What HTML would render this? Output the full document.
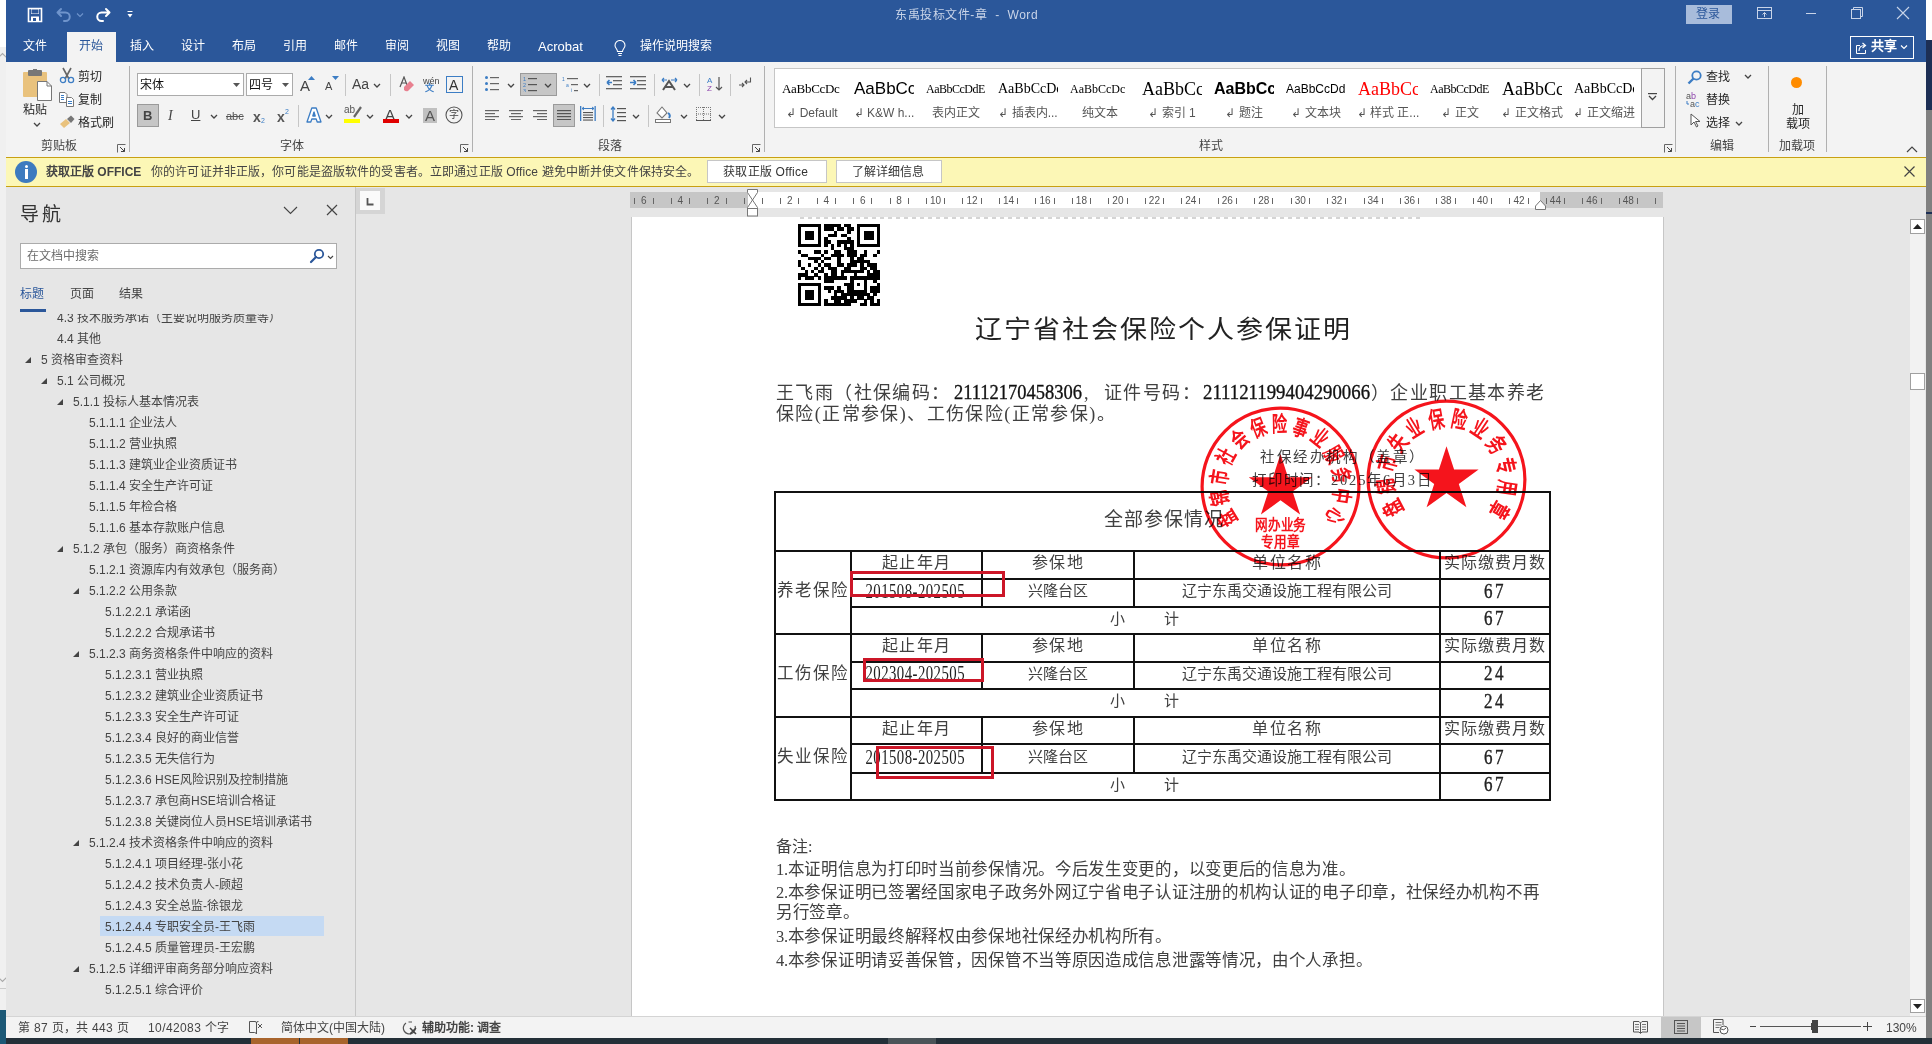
<!DOCTYPE html>
<html lang="zh-CN"><head><meta charset="utf-8">
<style>
*{margin:0;padding:0;box-sizing:border-box}
html,body{width:1932px;height:1044px;overflow:hidden;background:#e6e6e6;font-family:"Liberation Sans",sans-serif;}
.a{position:absolute}
.t{position:absolute;white-space:nowrap;line-height:1;font-size:12px}
.w{color:#fff}
.sep{position:absolute;width:1px;background:#c6c6c6}
.doc{font-family:"Liberation Serif",serif;color:#333}
</style></head><body>
<!-- desktop strips -->
<div class="a" style="left:0;top:0;width:6px;height:47px;background:#fff"></div>
<div class="a" style="left:0;top:47px;width:6px;height:963px;background:#f0f0f0"></div>
<div class="a" style="left:0;top:1010px;width:6px;height:34px;background:#1b5876"></div>
<svg class="a" style="left:0;top:52px" width="6" height="8" viewBox="0 0 6 8"><path d="M-2 6 L2.5 1.5 L7 6" fill="none" stroke="#aaa" stroke-width="1.2"/></svg>
<svg class="a" style="left:0;top:976px" width="6" height="7" viewBox="0 0 6 7"><path d="M-2 1 L2.5 5.5 L7 1" fill="none" stroke="#aaa" stroke-width="1.2"/></svg>
<div class="a" style="left:0;top:988px;width:6px;height:1px;background:#ccc"></div>
<div class="a" style="left:1929px;top:4px;width:3px;height:4px;background:#f08a24"></div>
<div class="a" style="left:1929px;top:9px;width:3px;height:6px;background:#2a9a3a"></div>
<div class="a" style="left:1926px;top:0;width:6px;height:40px;background:#fff"></div>
<div class="a" style="left:1926px;top:40px;width:6px;height:70px;background:#1d2f55"></div>
<div class="a" style="left:1926px;top:110px;width:6px;height:934px;background:#808080"></div>
<div class="a" style="left:1926px;top:212px;width:6px;height:2px;background:#1d2f55"></div>
<!-- title bar -->
<div id="title" class="a" style="left:6px;top:0;width:1920px;height:62px;background:#2b579a"></div>
<!-- title content -->
<svg class="a" style="left:27px;top:7px" width="16" height="16" viewBox="0 0 16 16"><path d="M1.5 1.5h13v13h-13z" fill="none" stroke="#fff" stroke-width="1.6"/><rect x="4" y="2" width="8" height="5" fill="#fff"/><rect x="4.5" y="2.5" width="7" height="4" fill="#2b579a"/><rect x="4" y="9.5" width="8" height="5" fill="#fff"/><rect x="6" y="11" width="3" height="3" fill="#2b579a"/></svg>
<svg class="a" style="left:56px;top:7px" width="16" height="16" viewBox="0 0 16 16"><path d="M5 2 L1.5 5.5 L5 9 M1.5 5.5 H9.5 A4.2 4.2 0 0 1 9.5 14 H8" fill="none" stroke="#6f94cc" stroke-width="2" stroke-linecap="round" stroke-linejoin="round"/></svg>
<svg class="a" style="left:76px;top:12px" width="8" height="6" viewBox="0 0 8 6"><path d="M1 1.5 L4 4.5 L7 1.5" fill="none" stroke="#6f94cc" stroke-width="1.1"/></svg>
<svg class="a" style="left:95px;top:7px" width="16" height="16" viewBox="0 0 16 16"><path d="M11 2 L14.5 5.5 L11 9 M14.5 5.5 H6.5 A4.2 4.2 0 0 0 6.5 14 H8" fill="none" stroke="#fff" stroke-width="2" stroke-linecap="round" stroke-linejoin="round"/></svg>
<svg class="a" style="left:127px;top:11px" width="7" height="8" viewBox="0 0 7 8"><rect x="0.5" y="0" width="5" height="1" fill="#fff"/><path d="M0.5 3 H5.5 L3 6.5 Z" fill="#fff"/></svg>
<div class="t" style="left:895px;top:9px;color:#c9d4e8;font-size:12px;letter-spacing:0.55px">东禹投标文件-章&nbsp;&nbsp;-&nbsp;&nbsp;Word</div>
<div class="a" style="left:1686px;top:5px;width:46px;height:19px;background:#a8bcdb"></div>
<div class="t" style="left:1696px;top:8px;color:#2b579a;font-size:12px">登录</div>
<svg class="a" style="left:1757px;top:7px" width="15" height="12" viewBox="0 0 15 12"><rect x="0.5" y="0.5" width="14" height="11" fill="none" stroke="#c9d4e8"/><path d="M0.5 3.5 H14.5" stroke="#c9d4e8"/><path d="M7.5 10 V5.5 M5.5 7.5 L7.5 5.5 L9.5 7.5" fill="none" stroke="#c9d4e8"/></svg>
<div class="a" style="left:1806px;top:13px;width:10px;height:1px;background:#c9d4e8"></div>
<svg class="a" style="left:1851px;top:7px" width="12" height="12" viewBox="0 0 12 12"><rect x="0.5" y="2.5" width="9" height="9" fill="none" stroke="#c9d4e8"/><path d="M2.5 2.5 V0.5 H11.5 V9.5 H9.5" fill="none" stroke="#c9d4e8"/></svg>
<svg class="a" style="left:1896px;top:6px" width="14" height="14" viewBox="0 0 14 14"><path d="M1 1 L13 13 M13 1 L1 13" stroke="#c9d4e8" stroke-width="1.1"/></svg>
<!-- tabs -->
<div class="a" style="left:67px;top:32px;width:49px;height:30px;background:#f3f3f3"></div>
<div class="t w" style="left:23px;top:40px">文件</div>
<div class="t" style="left:79px;top:40px;color:#2b579a">开始</div>
<div class="t w" style="left:130px;top:40px">插入</div>
<div class="t w" style="left:181px;top:40px">设计</div>
<div class="t w" style="left:232px;top:40px">布局</div>
<div class="t w" style="left:283px;top:40px">引用</div>
<div class="t w" style="left:334px;top:40px">邮件</div>
<div class="t w" style="left:385px;top:40px">审阅</div>
<div class="t w" style="left:436px;top:40px">视图</div>
<div class="t w" style="left:487px;top:40px">帮助</div>
<div class="t w" style="left:538px;top:40px;font-size:13px">Acrobat</div>
<svg class="a" style="left:613px;top:40px" width="14" height="17" viewBox="0 0 14 17"><path d="M4.5 11.5 C4.5 9 2 8 2 5.5 A5 5 0 0 1 12 5.5 C12 8 9.5 9 9.5 11.5 Z" fill="none" stroke="#fff" stroke-width="1.1"/><path d="M5 13.5 H9 M5.5 15.5 H8.5" stroke="#fff" stroke-width="1.1"/></svg>
<div class="t w" style="left:640px;top:40px">操作说明搜索</div>
<div class="a" style="left:1850px;top:36px;width:64px;height:23px;border:1px solid #fff"></div>
<svg class="a" style="left:1855px;top:41px" width="13" height="14" viewBox="0 0 13 14"><path d="M5 4.5 H1.5 V12.5 H10.5 V9" fill="none" stroke="#fff" stroke-width="1"/><path d="M4 10 C4 6 6.5 4.5 9.5 4.5 M7.5 2 L10.5 4.5 L7.5 7" fill="none" stroke="#fff" stroke-width="1.2"/></svg>
<div class="t w" style="left:1871px;top:39px;font-weight:bold;font-size:13px">共享</div>
<svg class="a" style="left:1900px;top:44px" width="8" height="6" viewBox="0 0 8 6"><path d="M1 1.5 L4 4.5 L7 1.5" fill="none" stroke="#fff" stroke-width="1.2"/></svg>
<!-- ribbon -->
<div id="ribbon" class="a" style="left:6px;top:62px;width:1920px;height:95px;background:#f3f3f3"></div>
<svg class="a" style="left:22px;top:69px" width="30" height="32" viewBox="0 0 30 32"><rect x="1" y="3" width="24" height="25" rx="1" fill="#e9c27d"/><rect x="6" y="1" width="14" height="6" rx="1" fill="#777"/><rect x="11" y="0" width="4" height="3" fill="#777"/><path d="M15.5 12.5 H25 L29.5 17 V31.5 H15.5 Z" fill="#fff" stroke="#777" stroke-width="1"/><path d="M25 12.5 V17 H29.5" fill="none" stroke="#777"/></svg>
<div class="t" style="left:23px;top:104px;color:#262626">粘贴</div>
<svg class="a" style="left:33px;top:122px" width="8" height="5" viewBox="0 0 8 5"><path d="M1 1 L4 4 L7 1" fill="none" stroke="#444" stroke-width="1.3"/></svg>
<svg class="a" style="left:59px;top:67px" width="16" height="17" viewBox="0 0 16 17"><path d="M4 1 L10 12 M12 1 L6 12" stroke="#666" stroke-width="1.6"/><circle cx="4" cy="13" r="2.6" fill="none" stroke="#3c7dc4" stroke-width="1.3"/><circle cx="12" cy="13" r="2.6" fill="none" stroke="#3c7dc4" stroke-width="1.3"/></svg>
<div class="t" style="left:78px;top:71px;color:#262626">剪切</div>
<svg class="a" style="left:59px;top:92px" width="16" height="15" viewBox="0 0 16 15"><path d="M0.5 0.5 H6 L8 2.5 V10.5 H0.5 Z" fill="#fff" stroke="#777"/><path d="M2 3.5h3M2 5.5h3M2 7.5h3" stroke="#3c7dc4"/><path d="M7.5 5.5 H12.5 L14.5 7.5 V14.5 H7.5 Z" fill="#fff" stroke="#777"/><path d="M9 9.5h4M9 11.5h4" stroke="#3c7dc4"/></svg>
<div class="t" style="left:78px;top:94px;color:#262626">复制</div>
<svg class="a" style="left:59px;top:114px" width="17" height="15" viewBox="0 0 17 15"><path d="M1 10 L7 5 L11 9 L5 14 Z" fill="#e9c27d"/><path d="M8 5 L12 1.5 L15.5 5 L12 9 Z" fill="#777"/></svg>
<div class="t" style="left:78px;top:117px;color:#262626">格式刷</div>
<div class="t" style="left:41px;top:140px;color:#444">剪贴板</div>
<svg class="a" style="left:117px;top:144px" width="9" height="9" viewBox="0 0 9 9"><path d="M0.5 8.5 V0.5 H8.5" fill="none" stroke="#666" stroke-width="1"/><path d="M3 3 L7.5 7.5 M4 7.5 H7.5 V4" fill="none" stroke="#444" stroke-width="1"/></svg>
<div class="a" style="left:129px;top:66px;width:1px;height:86px;background:#b0b0b0"></div>
<div class="a" style="left:137px;top:73px;width:107px;height:23px;background:#fff;border:1px solid #ababab"></div>
<div class="t" style="left:140px;top:79px;color:#111">宋体</div>
<svg class="a" style="left:233px;top:83px" width="7" height="4" viewBox="0 0 7 4"><path d="M0 0 H7 L3.5 4 Z" fill="#555"/></svg>
<div class="a" style="left:246px;top:73px;width:47px;height:23px;background:#fff;border:1px solid #ababab"></div>
<div class="t" style="left:249px;top:79px;color:#111">四号</div>
<svg class="a" style="left:282px;top:83px" width="7" height="4" viewBox="0 0 7 4"><path d="M0 0 H7 L3.5 4 Z" fill="#555"/></svg>
<div class="t" style="left:300px;top:78px;font-size:15px;color:#444">A</div>
<svg class="a" style="left:308px;top:76px" width="7" height="4" viewBox="0 0 7 4"><path d="M0 4 H7 L3.5 0 Z" fill="#3c7dc4"/></svg>
<div class="t" style="left:325px;top:81px;font-size:11px;color:#444">A</div>
<svg class="a" style="left:332px;top:76px" width="7" height="4" viewBox="0 0 7 4"><path d="M0 0 H7 L3.5 4 Z" fill="#3c7dc4"/></svg>
<div class="a" style="left:345px;top:74px;width:1px;height:22px;background:#c6c6c6"></div>
<div class="t" style="left:352px;top:77px;font-size:14px;color:#444">Aa</div>
<svg class="a" style="left:373px;top:83px" width="8" height="5" viewBox="0 0 8 5"><path d="M1 1 L4 4 L7 1" fill="none" stroke="#444" stroke-width="1.3"/></svg>
<div class="a" style="left:390px;top:74px;width:1px;height:22px;background:#c6c6c6"></div>
<svg class="a" style="left:399px;top:76px" width="17" height="17" viewBox="0 0 17 17"><path d="M1 11 L5 1 L8 9" fill="none" stroke="#555" stroke-width="1.2"/><path d="M2.5 7 H7" stroke="#555"/><path d="M5 11 L11 5 L15 9 L9 15 Q7 16 5 14 Z" fill="#e8808f"/></svg>
<div class="t" style="left:423px;top:77px;font-size:9px;color:#444">wén</div>
<div class="t" style="left:425px;top:84px;font-size:9px;color:#3c7dc4;font-weight:bold">文</div>
<div class="a" style="left:446px;top:76px;width:17px;height:17px;border:1px solid #3c7dc4"></div>
<div class="t" style="left:449px;top:78px;font-size:14px;color:#333">A</div>
<div class="a" style="left:137px;top:104px;width:22px;height:23px;background:#c6c6c6;border:1px solid #9a9a9a"></div>
<div class="t" style="left:143px;top:109px;font-size:13px;font-weight:bold;color:#444">B</div>
<div class="t" style="left:168px;top:109px;font-size:14px;font-style:italic;font-family:Liberation Serif,serif;color:#444">I</div>
<div class="t" style="left:191px;top:108px;font-size:13px;color:#444;text-decoration:underline">U</div>
<svg class="a" style="left:210px;top:114px" width="8" height="5" viewBox="0 0 8 5"><path d="M1 1 L4 4 L7 1" fill="none" stroke="#444" stroke-width="1.3"/></svg>
<div class="t" style="left:226px;top:111px;font-size:11px;color:#555;text-decoration:line-through">abc</div>
<div class="t" style="left:253px;top:110px;font-size:14px;font-weight:bold;color:#555">x</div>
<div class="t" style="left:261px;top:117px;font-size:7px;color:#3c7dc4">2</div>
<div class="t" style="left:277px;top:110px;font-size:14px;font-weight:bold;color:#555">x</div>
<div class="t" style="left:285px;top:108px;font-size:7px;color:#3c7dc4">2</div>
<div class="a" style="left:298px;top:105px;width:1px;height:22px;background:#c6c6c6"></div>
<svg class="a" style="left:306px;top:107px" width="16" height="16" viewBox="0 0 16 16"><path d="M5.8 1 H10.2 L15 15 H11.2 L10.2 12 H5.8 L4.8 15 H1 Z M6.8 9 H9.2 L8 5 Z" fill="#fff" stroke="#3c7dc4" stroke-width="1.3" stroke-linejoin="round"/><path d="M6.8 9 H9.2 L8 5 Z" fill="#3c7dc4"/></svg>
<svg class="a" style="left:325px;top:114px" width="8" height="5" viewBox="0 0 8 5"><path d="M1 1 L4 4 L7 1" fill="none" stroke="#444" stroke-width="1.3"/></svg>
<div class="t" style="left:344px;top:105px;font-size:10px;color:#555">ab</div>
<svg class="a" style="left:352px;top:106px" width="10" height="14" viewBox="0 0 10 14"><path d="M9 1 L2 11" stroke="#666" stroke-width="2.2"/></svg>
<div class="a" style="left:344px;top:119px;width:16px;height:4px;background:#ffff00"></div>
<svg class="a" style="left:366px;top:114px" width="8" height="5" viewBox="0 0 8 5"><path d="M1 1 L4 4 L7 1" fill="none" stroke="#444" stroke-width="1.3"/></svg>
<div class="t" style="left:385px;top:107px;font-size:15px;color:#444">A</div>
<div class="a" style="left:383px;top:119px;width:16px;height:4px;background:#e00000"></div>
<svg class="a" style="left:405px;top:114px" width="8" height="5" viewBox="0 0 8 5"><path d="M1 1 L4 4 L7 1" fill="none" stroke="#444" stroke-width="1.3"/></svg>
<div class="a" style="left:423px;top:108px;width:14px;height:15px;background:#c0c0c0"></div>
<div class="t" style="left:425px;top:108px;font-size:15px;color:#555">A</div>
<svg class="a" style="left:445px;top:106px" width="18" height="18" viewBox="0 0 18 18"><circle cx="9" cy="9" r="8" fill="none" stroke="#555" stroke-width="1.1"/></svg>
<div class="t" style="left:449px;top:110px;font-size:10px;color:#444">字</div>
<div class="t" style="left:280px;top:140px;color:#444">字体</div>
<svg class="a" style="left:460px;top:144px" width="9" height="9" viewBox="0 0 9 9"><path d="M0.5 8.5 V0.5 H8.5" fill="none" stroke="#666" stroke-width="1"/><path d="M3 3 L7.5 7.5 M4 7.5 H7.5 V4" fill="none" stroke="#444" stroke-width="1"/></svg>
<div class="a" style="left:472px;top:66px;width:1px;height:86px;background:#b0b0b0"></div>
<svg class="a" style="left:485px;top:76px" width="14" height="16" viewBox="0 0 14 16"><circle cx="1.5" cy="1.5" r="1.5" fill="#3c7dc4"/><rect x="5" y="1" width="9" height="1.2" fill="#666"/><circle cx="1.5" cy="7.5" r="1.5" fill="#3c7dc4"/><rect x="5" y="7" width="9" height="1.2" fill="#666"/><circle cx="1.5" cy="13.5" r="1.5" fill="#3c7dc4"/><rect x="5" y="13" width="9" height="1.2" fill="#666"/></svg>
<svg class="a" style="left:507px;top:83px" width="8" height="5" viewBox="0 0 8 5"><path d="M1 1 L4 4 L7 1" fill="none" stroke="#444" stroke-width="1.3"/></svg>
<div class="a" style="left:520px;top:73px;width:37px;height:23px;background:#c6c6c6;border:1px solid #9a9a9a"></div>
<svg class="a" style="left:523px;top:76px" width="16" height="16" viewBox="0 0 16 16"><text x="0" y="5" font-size="5.5" fill="#3c7dc4" font-family="Liberation Sans">1</text><rect x="5" y="2" width="9" height="1.2" fill="#555"/><text x="0" y="11" font-size="5.5" fill="#3c7dc4" font-family="Liberation Sans">2</text><rect x="5" y="8" width="9" height="1.2" fill="#555"/><text x="0" y="17" font-size="5.5" fill="#3c7dc4" font-family="Liberation Sans">3</text><rect x="5" y="14" width="9" height="1.2" fill="#555"/></svg>
<svg class="a" style="left:544px;top:83px" width="8" height="5" viewBox="0 0 8 5"><path d="M1 1 L4 4 L7 1" fill="none" stroke="#444" stroke-width="1.3"/></svg>
<svg class="a" style="left:562px;top:76px" width="20" height="16" viewBox="0 0 20 16"><text x="0" y="5" font-size="5" fill="#3c7dc4" font-family="Liberation Sans">1</text><rect x="5" y="2" width="11" height="1.2" fill="#666"/><text x="4" y="11" font-size="5" fill="#3c7dc4" font-family="Liberation Sans">a</text><rect x="9" y="8" width="7" height="1.2" fill="#666"/><text x="9" y="16" font-size="5" fill="#3c7dc4" font-family="Liberation Sans">i</text><rect x="12" y="14" width="4" height="1.2" fill="#666"/></svg>
<svg class="a" style="left:583px;top:83px" width="8" height="5" viewBox="0 0 8 5"><path d="M1 1 L4 4 L7 1" fill="none" stroke="#444" stroke-width="1.3"/></svg>
<div class="a" style="left:599px;top:74px;width:1px;height:22px;background:#c6c6c6"></div>
<svg class="a" style="left:606px;top:76px" width="18" height="15" viewBox="0 0 18 15"><rect x="0" y="0" width="16" height="1.3" fill="#666"/><rect x="7" y="4" width="9" height="1.3" fill="#666"/><rect x="7" y="8" width="9" height="1.3" fill="#666"/><rect x="0" y="12" width="16" height="1.3" fill="#666"/><path d="M1 6.5 H6 M1 6.5 L3.5 4 M1 6.5 L3.5 9" stroke="#3c7dc4" stroke-width="1.6" fill="none"/></svg>
<svg class="a" style="left:630px;top:76px" width="18" height="15" viewBox="0 0 18 15"><rect x="0" y="0" width="16" height="1.3" fill="#666"/><rect x="7" y="4" width="9" height="1.3" fill="#666"/><rect x="7" y="8" width="9" height="1.3" fill="#666"/><rect x="0" y="12" width="16" height="1.3" fill="#666"/><path d="M0 6.5 H6 M6 6.5 L3.5 4 M6 6.5 L3.5 9" stroke="#3c7dc4" stroke-width="1.6" fill="none"/></svg>
<div class="a" style="left:654px;top:74px;width:1px;height:22px;background:#c6c6c6"></div>
<svg class="a" style="left:661px;top:77px" width="18" height="14" viewBox="0 0 18 14"><path d="M2 13 L8 4 L14 13 M4.5 10 H11.5" fill="none" stroke="#555" stroke-width="2"/><path d="M1 3 H6 M1 3 L3 1 M1 3 L3 5 M10 3 H16 M16 3 L14 1 M16 3 L14 5" stroke="#3c7dc4" stroke-width="1.2" fill="none"/></svg>
<svg class="a" style="left:683px;top:83px" width="8" height="5" viewBox="0 0 8 5"><path d="M1 1 L4 4 L7 1" fill="none" stroke="#444" stroke-width="1.3"/></svg>
<div class="a" style="left:699px;top:74px;width:1px;height:22px;background:#c6c6c6"></div>
<svg class="a" style="left:707px;top:76px" width="16" height="16" viewBox="0 0 16 16"><text x="0" y="7" font-size="8" fill="#3c7dc4" font-family="Liberation Sans">A</text><text x="0" y="15" font-size="8" fill="#8e44ad" font-family="Liberation Sans">Z</text><path d="M12 1 V14 M9 11 L12 14 L15 11" stroke="#555" stroke-width="1.2" fill="none"/></svg>
<div class="a" style="left:730px;top:74px;width:1px;height:22px;background:#c6c6c6"></div>
<svg class="a" style="left:739px;top:77px" width="13" height="12" viewBox="0 0 13 12"><path d="M11.5 0.5 V5 H6 M8 3 L6 5 L8 7" fill="none" stroke="#555" stroke-width="1.1"/><path d="M0 8 H5 M3 6 L5 8 L3 10" fill="none" stroke="#555" stroke-width="1.1"/></svg>
<svg class="a" style="left:485px;top:110px" width="14" height="10" viewBox="0 0 14 10"><rect x="0" y="0" width="14" height="1.2" fill="#666"/><rect x="0" y="3" width="10" height="1.2" fill="#666"/><rect x="0" y="6" width="14" height="1.2" fill="#666"/><rect x="0" y="9" width="10" height="1.2" fill="#666"/></svg>
<svg class="a" style="left:509px;top:110px" width="14" height="10" viewBox="0 0 14 10"><rect x="0" y="0" width="14" height="1.2" fill="#666"/><rect x="2" y="3" width="10" height="1.2" fill="#666"/><rect x="0" y="6" width="14" height="1.2" fill="#666"/><rect x="2" y="9" width="10" height="1.2" fill="#666"/></svg>
<svg class="a" style="left:533px;top:110px" width="14" height="10" viewBox="0 0 14 10"><rect x="0" y="0" width="14" height="1.2" fill="#666"/><rect x="4" y="3" width="10" height="1.2" fill="#666"/><rect x="0" y="6" width="14" height="1.2" fill="#666"/><rect x="4" y="9" width="10" height="1.2" fill="#666"/></svg>
<div class="a" style="left:553px;top:104px;width:22px;height:23px;background:#c6c6c6;border:1px solid #9a9a9a"></div>
<svg class="a" style="left:557px;top:110px" width="14" height="10" viewBox="0 0 14 10"><rect x="0" y="0" width="14" height="1.2" fill="#555"/><rect x="0" y="3" width="14" height="1.2" fill="#555"/><rect x="0" y="6" width="14" height="1.2" fill="#555"/><rect x="0" y="9" width="14" height="1.2" fill="#555"/></svg>
<svg class="a" style="left:579px;top:106px" width="18" height="16" viewBox="0 0 18 16"><rect x="1" y="0" width="1.3" height="15" fill="#3c7dc4"/><rect x="15.5" y="0" width="1.3" height="15" fill="#3c7dc4"/><path d="M3 2.5 H15 M3 2.5 L5 1 M3 2.5 L5 4 M15 2.5 L13 1 M15 2.5 L13 4" stroke="#3c7dc4" stroke-width="1" fill="none"/><rect x="4" y="6" width="10" height="1.1" fill="#555"/><rect x="4" y="8.5" width="10" height="1.1" fill="#555"/><rect x="4" y="11" width="10" height="1.1" fill="#555"/><rect x="4" y="13.5" width="10" height="1.1" fill="#555"/></svg>
<div class="a" style="left:603px;top:105px;width:1px;height:22px;background:#c6c6c6"></div>
<svg class="a" style="left:610px;top:106px" width="17" height="16" viewBox="0 0 17 16"><path d="M3 1 V15 M1 3.5 L3 1 L5 3.5 M1 12.5 L3 15 L5 12.5" stroke="#3c7dc4" stroke-width="1.3" fill="none"/><rect x="7" y="2" width="9" height="1.2" fill="#555"/><rect x="7" y="6" width="9" height="1.2" fill="#555"/><rect x="7" y="10" width="9" height="1.2" fill="#555"/><rect x="7" y="14" width="9" height="1.2" fill="#555"/></svg>
<svg class="a" style="left:632px;top:114px" width="8" height="5" viewBox="0 0 8 5"><path d="M1 1 L4 4 L7 1" fill="none" stroke="#444" stroke-width="1.3"/></svg>
<div class="a" style="left:648px;top:105px;width:1px;height:22px;background:#c6c6c6"></div>
<svg class="a" style="left:655px;top:106px" width="18" height="17" viewBox="0 0 18 17"><path d="M7 1 L2 7 L7 12 L12 7 Z" fill="#fff" stroke="#777" stroke-width="1.1"/><path d="M13 7 Q16 9 14 12" stroke="#3c7dc4" stroke-width="2" fill="none"/><rect x="0.5" y="13.5" width="15" height="3" fill="#fff" stroke="#777"/></svg>
<svg class="a" style="left:680px;top:114px" width="8" height="5" viewBox="0 0 8 5"><path d="M1 1 L4 4 L7 1" fill="none" stroke="#444" stroke-width="1.3"/></svg>
<svg class="a" style="left:696px;top:107px" width="15" height="14" viewBox="0 0 15 14"><rect x="0" y="0" width="1" height="1" fill="#777"/><rect x="0" y="6.5" width="1" height="1" fill="#777"/><rect x="0" y="13" width="1" height="1" fill="#777"/><rect x="2" y="0" width="1" height="1" fill="#777"/><rect x="2" y="6.5" width="1" height="1" fill="#777"/><rect x="2" y="13" width="1" height="1" fill="#777"/><rect x="4" y="0" width="1" height="1" fill="#777"/><rect x="4" y="6.5" width="1" height="1" fill="#777"/><rect x="4" y="13" width="1" height="1" fill="#777"/><rect x="6" y="0" width="1" height="1" fill="#777"/><rect x="6" y="6.5" width="1" height="1" fill="#777"/><rect x="6" y="13" width="1" height="1" fill="#777"/><rect x="8" y="0" width="1" height="1" fill="#777"/><rect x="8" y="6.5" width="1" height="1" fill="#777"/><rect x="8" y="13" width="1" height="1" fill="#777"/><rect x="10" y="0" width="1" height="1" fill="#777"/><rect x="10" y="6.5" width="1" height="1" fill="#777"/><rect x="10" y="13" width="1" height="1" fill="#777"/><rect x="12" y="0" width="1" height="1" fill="#777"/><rect x="12" y="6.5" width="1" height="1" fill="#777"/><rect x="12" y="13" width="1" height="1" fill="#777"/><rect x="14" y="0" width="1" height="1" fill="#777"/><rect x="14" y="6.5" width="1" height="1" fill="#777"/><rect x="14" y="13" width="1" height="1" fill="#777"/><rect x="0" y="0" width="1" height="1" fill="#777"/><rect x="0" y="2" width="1" height="1" fill="#777"/><rect x="0" y="4" width="1" height="1" fill="#777"/><rect x="0" y="6" width="1" height="1" fill="#777"/><rect x="0" y="8" width="1" height="1" fill="#777"/><rect x="0" y="10" width="1" height="1" fill="#777"/><rect x="0" y="12" width="1" height="1" fill="#777"/><rect x="7" y="0" width="1" height="1" fill="#777"/><rect x="7" y="2" width="1" height="1" fill="#777"/><rect x="7" y="4" width="1" height="1" fill="#777"/><rect x="7" y="6" width="1" height="1" fill="#777"/><rect x="7" y="8" width="1" height="1" fill="#777"/><rect x="7" y="10" width="1" height="1" fill="#777"/><rect x="7" y="12" width="1" height="1" fill="#777"/><rect x="14" y="0" width="1" height="1" fill="#777"/><rect x="14" y="2" width="1" height="1" fill="#777"/><rect x="14" y="4" width="1" height="1" fill="#777"/><rect x="14" y="6" width="1" height="1" fill="#777"/><rect x="14" y="8" width="1" height="1" fill="#777"/><rect x="14" y="10" width="1" height="1" fill="#777"/><rect x="14" y="12" width="1" height="1" fill="#777"/><rect x="0" y="13" width="15" height="1" fill="#555"/></svg>
<svg class="a" style="left:718px;top:114px" width="8" height="5" viewBox="0 0 8 5"><path d="M1 1 L4 4 L7 1" fill="none" stroke="#444" stroke-width="1.3"/></svg>
<div class="t" style="left:598px;top:140px;color:#444">段落</div>
<svg class="a" style="left:752px;top:144px" width="9" height="9" viewBox="0 0 9 9"><path d="M0.5 8.5 V0.5 H8.5" fill="none" stroke="#666" stroke-width="1"/><path d="M3 3 L7.5 7.5 M4 7.5 H7.5 V4" fill="none" stroke="#444" stroke-width="1"/></svg>
<div class="a" style="left:764px;top:66px;width:1px;height:86px;background:#b0b0b0"></div>
<div class="a" style="left:774px;top:68px;width:868px;height:60px;background:#fff;border:1px solid #c6c6c6;border-right:none"></div>
<div class="a" style="left:782px;top:78px;width:60px;height:22px;overflow:hidden;text-align:left;white-space:nowrap;line-height:22px;font-family:Liberation Serif,serif;font-size:13px;color:#000;letter-spacing:-0.3px">AaBbCcDc</div>
<div class="a" style="left:776px;top:107px;width:72px;text-align:center;white-space:nowrap;line-height:1;font-size:12px;color:#555">↲ Default</div>
<div class="a" style="left:854px;top:78px;width:60px;height:22px;overflow:hidden;text-align:left;white-space:nowrap;line-height:22px;font-family:Liberation Sans;font-size:17px;color:#000">AaBbCc</div>
<div class="a" style="left:848px;top:107px;width:72px;text-align:center;white-space:nowrap;line-height:1;font-size:12px;color:#555">↲ K&amp;W h...</div>
<div class="a" style="left:926px;top:78px;width:60px;height:22px;overflow:hidden;text-align:left;white-space:nowrap;line-height:22px;font-family:Liberation Serif,serif;font-size:12px;color:#000;letter-spacing:-0.5px">AaBbCcDdE</div>
<div class="a" style="left:920px;top:107px;width:72px;text-align:center;white-space:nowrap;line-height:1;font-size:12px;color:#555">表内正文</div>
<div class="a" style="left:998px;top:78px;width:60px;height:22px;overflow:hidden;text-align:left;white-space:nowrap;line-height:22px;font-family:Liberation Serif,serif;font-size:14px;color:#000">AaBbCcDc</div>
<div class="a" style="left:992px;top:107px;width:72px;text-align:center;white-space:nowrap;line-height:1;font-size:12px;color:#555">↲ 插表内...</div>
<div class="a" style="left:1070px;top:78px;width:60px;height:22px;overflow:hidden;text-align:left;white-space:nowrap;line-height:22px;font-family:Liberation Serif,serif;font-size:12px;color:#000;letter-spacing:0px">AaBbCcDc</div>
<div class="a" style="left:1064px;top:107px;width:72px;text-align:center;white-space:nowrap;line-height:1;font-size:12px;color:#555">纯文本</div>
<div class="a" style="left:1142px;top:78px;width:60px;height:22px;overflow:hidden;text-align:left;white-space:nowrap;line-height:22px;font-family:Liberation Serif,serif;font-size:18px;color:#000">AaBbCc</div>
<div class="a" style="left:1136px;top:107px;width:72px;text-align:center;white-space:nowrap;line-height:1;font-size:12px;color:#555">↲ 索引 1</div>
<div class="a" style="left:1214px;top:78px;width:60px;height:22px;overflow:hidden;text-align:left;white-space:nowrap;line-height:22px;font-family:Liberation Sans;font-size:16px;font-weight:bold;color:#000">AaBbCc</div>
<div class="a" style="left:1208px;top:107px;width:72px;text-align:center;white-space:nowrap;line-height:1;font-size:12px;color:#555">↲ 题注</div>
<div class="a" style="left:1286px;top:78px;width:60px;height:22px;overflow:hidden;text-align:left;white-space:nowrap;line-height:22px;font-family:Liberation Sans;font-size:12px;color:#000">AaBbCcDd</div>
<div class="a" style="left:1280px;top:107px;width:72px;text-align:center;white-space:nowrap;line-height:1;font-size:12px;color:#555">↲ 文本块</div>
<div class="a" style="left:1358px;top:78px;width:60px;height:22px;overflow:hidden;text-align:left;white-space:nowrap;line-height:22px;font-family:Liberation Serif,serif;font-size:18px;color:#f00">AaBbCc</div>
<div class="a" style="left:1352px;top:107px;width:72px;text-align:center;white-space:nowrap;line-height:1;font-size:12px;color:#555">↲ 样式 正...</div>
<div class="a" style="left:1430px;top:78px;width:60px;height:22px;overflow:hidden;text-align:left;white-space:nowrap;line-height:22px;font-family:Liberation Serif,serif;font-size:12px;color:#000;letter-spacing:-0.5px">AaBbCcDdE</div>
<div class="a" style="left:1424px;top:107px;width:72px;text-align:center;white-space:nowrap;line-height:1;font-size:12px;color:#555">↲ 正文</div>
<div class="a" style="left:1502px;top:78px;width:60px;height:22px;overflow:hidden;text-align:left;white-space:nowrap;line-height:22px;font-family:Liberation Serif,serif;font-size:18px;color:#000">AaBbCc</div>
<div class="a" style="left:1496px;top:107px;width:72px;text-align:center;white-space:nowrap;line-height:1;font-size:12px;color:#555">↲ 正文格式</div>
<div class="a" style="left:1574px;top:78px;width:60px;height:22px;overflow:hidden;text-align:left;white-space:nowrap;line-height:22px;font-family:Liberation Serif,serif;font-size:14px;color:#000">AaBbCcDc</div>
<div class="a" style="left:1568px;top:107px;width:72px;text-align:center;white-space:nowrap;line-height:1;font-size:12px;color:#555">↲ 正文缩进</div>
<div class="a" style="left:1641px;top:68px;width:24px;height:60px;border:1px solid #a0a0a0;background:#f3f3f3"></div>
<svg class="a" style="left:1648px;top:93px" width="9" height="8" viewBox="0 0 9 8"><rect x="0" y="0" width="9" height="1.2" fill="#444"/><path d="M1 3 L4.5 6.5 L8 3" fill="none" stroke="#444" stroke-width="1.3"/></svg>
<div class="t" style="left:1199px;top:140px;color:#444">样式</div>
<svg class="a" style="left:1664px;top:144px" width="9" height="9" viewBox="0 0 9 9"><path d="M0.5 8.5 V0.5 H8.5" fill="none" stroke="#666" stroke-width="1"/><path d="M3 3 L7.5 7.5 M4 7.5 H7.5 V4" fill="none" stroke="#444" stroke-width="1"/></svg>
<div class="a" style="left:1675px;top:66px;width:1px;height:86px;background:#b0b0b0"></div>
<svg class="a" style="left:1687px;top:70px" width="15" height="15" viewBox="0 0 15 15"><circle cx="9.5" cy="5.5" r="4.2" fill="none" stroke="#3c7dc4" stroke-width="1.8"/><path d="M6.5 8.5 L1.5 13.5" stroke="#3c7dc4" stroke-width="2.4"/></svg>
<div class="t" style="left:1706px;top:71px;color:#262626">查找</div>
<svg class="a" style="left:1744px;top:74px" width="8" height="5" viewBox="0 0 8 5"><path d="M1 1 L4 4 L7 1" fill="none" stroke="#444" stroke-width="1.3"/></svg>
<svg class="a" style="left:1686px;top:92px" width="17" height="16" viewBox="0 0 17 16"><text x="0" y="7" font-size="9" fill="#555" font-family="Liberation Sans">a</text><text x="5" y="7" font-size="9" fill="#8e44ad" font-family="Liberation Sans">b</text><text x="4" y="15" font-size="9" fill="#555" font-family="Liberation Sans">a</text><text x="9" y="15" font-size="9" fill="#3c7dc4" font-family="Liberation Sans">c</text><path d="M1 9 V12 H3" stroke="#3c7dc4" fill="none"/></svg>
<div class="t" style="left:1706px;top:94px;color:#262626">替换</div>
<svg class="a" style="left:1690px;top:113px" width="12" height="15" viewBox="0 0 12 15"><path d="M1 1 V12 L4 9 L6.5 14 L8 13 L5.5 8.5 H10 Z" fill="#fff" stroke="#555" stroke-width="1"/></svg>
<div class="t" style="left:1706px;top:117px;color:#262626">选择</div>
<svg class="a" style="left:1735px;top:121px" width="8" height="5" viewBox="0 0 8 5"><path d="M1 1 L4 4 L7 1" fill="none" stroke="#444" stroke-width="1.3"/></svg>
<div class="t" style="left:1710px;top:140px;color:#444">编辑</div>
<div class="a" style="left:1768px;top:66px;width:1px;height:86px;background:#b0b0b0"></div>
<div class="a" style="left:1791px;top:77px;width:11px;height:11px;border-radius:50%;background:#ff8c00"></div>
<div class="t" style="left:1792px;top:104px;color:#262626">加</div>
<div class="t" style="left:1786px;top:118px;color:#262626">载项</div>
<div class="t" style="left:1779px;top:140px;color:#444">加载项</div>
<div class="a" style="left:1826px;top:66px;width:1px;height:86px;background:#b0b0b0"></div>
<svg class="a" style="left:1906px;top:146px" width="12" height="7" viewBox="0 0 12 7"><path d="M1 6 L6 1 L11 6" fill="none" stroke="#444" stroke-width="1.2"/></svg>
<!-- yellow bar -->
<div id="ybar" class="a" style="left:6px;top:157px;width:1920px;height:30px;background:#fcf7b6;border-top:1px solid #c8a012;border-bottom:1px solid #c8a012"></div>
<!-- nav pane -->
<div id="nav" class="a" style="left:6px;top:187px;width:349px;height:830px;background:#e6e6e6"></div>
<div class="a" style="left:355px;top:187px;width:1px;height:830px;background:#c6c6c6"></div>
<div class="a" style="left:15px;top:161px;width:22px;height:22px;border-radius:50%;background:#3d7bbf"></div>
<div class="a" style="left:25px;top:165px;width:3px;height:3px;background:#fff;border-radius:50%"></div>
<div class="a" style="left:25px;top:169px;width:3px;height:10px;background:#fff"></div>
<div class="t" style="left:46px;top:166px;font-weight:bold;color:#444;font-size:12px">获取正版 OFFICE</div>
<div class="t" style="left:151px;top:166px;color:#444;font-size:12px;letter-spacing:0.13px">你的许可证并非正版，你可能是盗版软件的受害者。立即通过正版 Office 避免中断并使文件保持安全。</div>
<div class="a" style="left:707px;top:160px;width:120px;height:23px;background:#fff;border:1px solid #c6c6c6"></div>
<div class="t" style="left:723px;top:166px;color:#333;font-size:12px;letter-spacing:0.25px">获取正版 Office</div>
<div class="a" style="left:836px;top:160px;width:106px;height:23px;background:#fff;border:1px solid #c6c6c6"></div>
<div class="t" style="left:852px;top:166px;color:#333;font-size:12px">了解详细信息</div>
<svg class="a" style="left:1904px;top:166px" width="11" height="11" viewBox="0 0 11 11"><path d="M0.5 0.5 L10.5 10.5 M10.5 0.5 L0.5 10.5" stroke="#444" stroke-width="1.2"/></svg>
<div class="t" style="left:20px;top:205px;font-size:19px;letter-spacing:3px;color:#333">导航</div>
<svg class="a" style="left:283px;top:206px" width="15" height="9" viewBox="0 0 15 9"><path d="M1 1 L7.5 7.5 L14 1" fill="none" stroke="#444" stroke-width="1.1"/></svg>
<svg class="a" style="left:326px;top:204px" width="12" height="12" viewBox="0 0 12 12"><path d="M1 1 L11 11 M11 1 L1 11" stroke="#444" stroke-width="1.2"/></svg>
<div class="a" style="left:20px;top:243px;width:317px;height:26px;background:#fff;border:1px solid #ababab"></div>
<div class="t" style="left:27px;top:250px;color:#6d6d6d">在文档中搜索</div>
<svg class="a" style="left:309px;top:248px" width="16" height="16" viewBox="0 0 16 16"><circle cx="10" cy="6" r="4.2" fill="none" stroke="#2b579a" stroke-width="1.8"/><path d="M7 9 L2 14" stroke="#2b579a" stroke-width="2.2" stroke-linecap="round"/></svg>
<svg class="a" style="left:327px;top:255px" width="7" height="5" viewBox="0 0 7 5"><path d="M1 1 L3.5 3.5 L6 1" fill="none" stroke="#444" stroke-width="1.1"/></svg>
<div class="t" style="left:20px;top:288px;color:#2b579a">标题</div>
<div class="a" style="left:20px;top:309px;width:26px;height:3px;background:#2b579a"></div>
<div class="t" style="left:70px;top:288px;color:#444">页面</div>
<div class="t" style="left:119px;top:288px;color:#444">结果</div>
<div class="a" style="left:6px;top:314px;width:349px;height:702px;overflow:hidden">
<div class="t" style="left:51px;top:-2px;color:#444">4.3 技术服务承诺（主要说明服务质量等）</div>
<div class="t" style="left:51px;top:19px;color:#444">4.4 其他</div>
<svg class="a" style="left:19px;top:43px" width="6" height="6" viewBox="0 0 6 6"><path d="M6 0 V6 H0 Z" fill="#444"/></svg>
<div class="t" style="left:35px;top:40px;color:#444">5 资格审查资料</div>
<svg class="a" style="left:35px;top:64px" width="6" height="6" viewBox="0 0 6 6"><path d="M6 0 V6 H0 Z" fill="#444"/></svg>
<div class="t" style="left:51px;top:61px;color:#444">5.1 公司概况</div>
<svg class="a" style="left:51px;top:85px" width="6" height="6" viewBox="0 0 6 6"><path d="M6 0 V6 H0 Z" fill="#444"/></svg>
<div class="t" style="left:67px;top:82px;color:#444">5.1.1 投标人基本情况表</div>
<div class="t" style="left:83px;top:103px;color:#444">5.1.1.1 企业法人</div>
<div class="t" style="left:83px;top:124px;color:#444">5.1.1.2 营业执照</div>
<div class="t" style="left:83px;top:145px;color:#444">5.1.1.3 建筑业企业资质证书</div>
<div class="t" style="left:83px;top:166px;color:#444">5.1.1.4 安全生产许可证</div>
<div class="t" style="left:83px;top:187px;color:#444">5.1.1.5 年检合格</div>
<div class="t" style="left:83px;top:208px;color:#444">5.1.1.6 基本存款账户信息</div>
<svg class="a" style="left:51px;top:232px" width="6" height="6" viewBox="0 0 6 6"><path d="M6 0 V6 H0 Z" fill="#444"/></svg>
<div class="t" style="left:67px;top:229px;color:#444">5.1.2 承包（服务）商资格条件</div>
<div class="t" style="left:83px;top:250px;color:#444">5.1.2.1 资源库内有效承包（服务商）</div>
<svg class="a" style="left:67px;top:274px" width="6" height="6" viewBox="0 0 6 6"><path d="M6 0 V6 H0 Z" fill="#444"/></svg>
<div class="t" style="left:83px;top:271px;color:#444">5.1.2.2 公用条款</div>
<div class="t" style="left:99px;top:292px;color:#444">5.1.2.2.1 承诺函</div>
<div class="t" style="left:99px;top:313px;color:#444">5.1.2.2.2 合规承诺书</div>
<svg class="a" style="left:67px;top:337px" width="6" height="6" viewBox="0 0 6 6"><path d="M6 0 V6 H0 Z" fill="#444"/></svg>
<div class="t" style="left:83px;top:334px;color:#444">5.1.2.3 商务资格条件中响应的资料</div>
<div class="t" style="left:99px;top:355px;color:#444">5.1.2.3.1 营业执照</div>
<div class="t" style="left:99px;top:376px;color:#444">5.1.2.3.2 建筑业企业资质证书</div>
<div class="t" style="left:99px;top:397px;color:#444">5.1.2.3.3 安全生产许可证</div>
<div class="t" style="left:99px;top:418px;color:#444">5.1.2.3.4 良好的商业信誉</div>
<div class="t" style="left:99px;top:439px;color:#444">5.1.2.3.5 无失信行为</div>
<div class="t" style="left:99px;top:460px;color:#444">5.1.2.3.6 HSE风险识别及控制措施</div>
<div class="t" style="left:99px;top:481px;color:#444">5.1.2.3.7 承包商HSE培训合格证</div>
<div class="t" style="left:99px;top:502px;color:#444">5.1.2.3.8 关键岗位人员HSE培训承诺书</div>
<svg class="a" style="left:67px;top:526px" width="6" height="6" viewBox="0 0 6 6"><path d="M6 0 V6 H0 Z" fill="#444"/></svg>
<div class="t" style="left:83px;top:523px;color:#444">5.1.2.4 技术资格条件中响应的资料</div>
<div class="t" style="left:99px;top:544px;color:#444">5.1.2.4.1 项目经理-张小花</div>
<div class="t" style="left:99px;top:565px;color:#444">5.1.2.4.2 技术负责人-顾超</div>
<div class="t" style="left:99px;top:586px;color:#444">5.1.2.4.3 安全总监-徐银龙</div>
<div class="a" style="left:94px;top:602px;width:224px;height:20px;background:#c5daf3"></div>
<div class="t" style="left:99px;top:607px;color:#444">5.1.2.4.4 专职安全员-王飞雨</div>
<div class="t" style="left:99px;top:628px;color:#444">5.1.2.4.5 质量管理员-王宏鹏</div>
<svg class="a" style="left:67px;top:652px" width="6" height="6" viewBox="0 0 6 6"><path d="M6 0 V6 H0 Z" fill="#444"/></svg>
<div class="t" style="left:83px;top:649px;color:#444">5.1.2.5 详细评审商务部分响应资料</div>
<div class="t" style="left:99px;top:670px;color:#444">5.1.2.5.1 综合评价</div>
</div>
<!-- doc page -->
<div id="page" class="a" style="left:631px;top:217px;width:1033px;height:800px;background:#fff;border-left:1px solid #c6c6c6;border-right:1px solid #c6c6c6"></div>
<div class="a" style="left:356px;top:188px;width:29px;height:26px;background:#d5d5d5"></div>
<div class="a" style="left:360px;top:191px;width:20px;height:19px;background:#fafafa"></div>
<svg class="a" style="left:366px;top:198px" width="8" height="8" viewBox="0 0 8 8"><path d="M1.5 0 V6.5 H7.5" fill="none" stroke="#555" stroke-width="1.8"/></svg>
<div class="a" style="left:630px;top:192px;width:1033px;height:16px;background:#fff"></div>
<div class="a" style="left:630px;top:192px;width:118px;height:16px;background:#c6c6c6"></div>
<div class="a" style="left:1540px;top:192px;width:123px;height:16px;background:#c6c6c6"></div>
<div class="a" style="left:634.3px;top:198px;width:1px;height:6px;background:#666"></div>
<div class="t" style="left:633.9px;top:195px;width:20px;text-align:center;font-size:10px;color:#555;line-height:12px">6</div>
<div class="a" style="left:652.5px;top:198px;width:1px;height:6px;background:#666"></div>
<div class="a" style="left:670.8px;top:198px;width:1px;height:6px;background:#666"></div>
<div class="t" style="left:670.4px;top:195px;width:20px;text-align:center;font-size:10px;color:#555;line-height:12px">4</div>
<div class="a" style="left:689.0px;top:198px;width:1px;height:6px;background:#666"></div>
<div class="a" style="left:707.2px;top:198px;width:1px;height:6px;background:#666"></div>
<div class="t" style="left:706.8px;top:195px;width:20px;text-align:center;font-size:10px;color:#555;line-height:12px">2</div>
<div class="a" style="left:725.5px;top:198px;width:1px;height:6px;background:#666"></div>
<div class="a" style="left:743.7px;top:198px;width:1px;height:6px;background:#666"></div>
<div class="a" style="left:761.9px;top:198px;width:1px;height:6px;background:#666"></div>
<div class="a" style="left:780.1px;top:198px;width:1px;height:6px;background:#666"></div>
<div class="t" style="left:779.8px;top:195px;width:20px;text-align:center;font-size:10px;color:#555;line-height:12px">2</div>
<div class="a" style="left:798.4px;top:198px;width:1px;height:6px;background:#666"></div>
<div class="a" style="left:816.6px;top:198px;width:1px;height:6px;background:#666"></div>
<div class="t" style="left:816.2px;top:195px;width:20px;text-align:center;font-size:10px;color:#555;line-height:12px">4</div>
<div class="a" style="left:834.8px;top:198px;width:1px;height:6px;background:#666"></div>
<div class="a" style="left:853.1px;top:198px;width:1px;height:6px;background:#666"></div>
<div class="t" style="left:852.7px;top:195px;width:20px;text-align:center;font-size:10px;color:#555;line-height:12px">6</div>
<div class="a" style="left:871.3px;top:198px;width:1px;height:6px;background:#666"></div>
<div class="a" style="left:889.5px;top:198px;width:1px;height:6px;background:#666"></div>
<div class="t" style="left:889.1px;top:195px;width:20px;text-align:center;font-size:10px;color:#555;line-height:12px">8</div>
<div class="a" style="left:907.8px;top:198px;width:1px;height:6px;background:#666"></div>
<div class="a" style="left:926.0px;top:198px;width:1px;height:6px;background:#666"></div>
<div class="t" style="left:925.6px;top:195px;width:20px;text-align:center;font-size:10px;color:#555;line-height:12px">10</div>
<div class="a" style="left:944.2px;top:198px;width:1px;height:6px;background:#666"></div>
<div class="a" style="left:962.4px;top:198px;width:1px;height:6px;background:#666"></div>
<div class="t" style="left:962.1px;top:195px;width:20px;text-align:center;font-size:10px;color:#555;line-height:12px">12</div>
<div class="a" style="left:980.7px;top:198px;width:1px;height:6px;background:#666"></div>
<div class="a" style="left:998.9px;top:198px;width:1px;height:6px;background:#666"></div>
<div class="t" style="left:998.5px;top:195px;width:20px;text-align:center;font-size:10px;color:#555;line-height:12px">14</div>
<div class="a" style="left:1017.1px;top:198px;width:1px;height:6px;background:#666"></div>
<div class="a" style="left:1035.4px;top:198px;width:1px;height:6px;background:#666"></div>
<div class="t" style="left:1035.0px;top:195px;width:20px;text-align:center;font-size:10px;color:#555;line-height:12px">16</div>
<div class="a" style="left:1053.6px;top:198px;width:1px;height:6px;background:#666"></div>
<div class="a" style="left:1071.8px;top:198px;width:1px;height:6px;background:#666"></div>
<div class="t" style="left:1071.4px;top:195px;width:20px;text-align:center;font-size:10px;color:#555;line-height:12px">18</div>
<div class="a" style="left:1090.1px;top:198px;width:1px;height:6px;background:#666"></div>
<div class="a" style="left:1108.3px;top:198px;width:1px;height:6px;background:#666"></div>
<div class="t" style="left:1107.9px;top:195px;width:20px;text-align:center;font-size:10px;color:#555;line-height:12px">20</div>
<div class="a" style="left:1126.5px;top:198px;width:1px;height:6px;background:#666"></div>
<div class="a" style="left:1144.7px;top:198px;width:1px;height:6px;background:#666"></div>
<div class="t" style="left:1144.4px;top:195px;width:20px;text-align:center;font-size:10px;color:#555;line-height:12px">22</div>
<div class="a" style="left:1163.0px;top:198px;width:1px;height:6px;background:#666"></div>
<div class="a" style="left:1181.2px;top:198px;width:1px;height:6px;background:#666"></div>
<div class="t" style="left:1180.8px;top:195px;width:20px;text-align:center;font-size:10px;color:#555;line-height:12px">24</div>
<div class="a" style="left:1199.4px;top:198px;width:1px;height:6px;background:#666"></div>
<div class="a" style="left:1217.7px;top:198px;width:1px;height:6px;background:#666"></div>
<div class="t" style="left:1217.3px;top:195px;width:20px;text-align:center;font-size:10px;color:#555;line-height:12px">26</div>
<div class="a" style="left:1235.9px;top:198px;width:1px;height:6px;background:#666"></div>
<div class="a" style="left:1254.1px;top:198px;width:1px;height:6px;background:#666"></div>
<div class="t" style="left:1253.7px;top:195px;width:20px;text-align:center;font-size:10px;color:#555;line-height:12px">28</div>
<div class="a" style="left:1272.4px;top:198px;width:1px;height:6px;background:#666"></div>
<div class="a" style="left:1290.6px;top:198px;width:1px;height:6px;background:#666"></div>
<div class="t" style="left:1290.2px;top:195px;width:20px;text-align:center;font-size:10px;color:#555;line-height:12px">30</div>
<div class="a" style="left:1308.8px;top:198px;width:1px;height:6px;background:#666"></div>
<div class="a" style="left:1327.0px;top:198px;width:1px;height:6px;background:#666"></div>
<div class="t" style="left:1326.7px;top:195px;width:20px;text-align:center;font-size:10px;color:#555;line-height:12px">32</div>
<div class="a" style="left:1345.3px;top:198px;width:1px;height:6px;background:#666"></div>
<div class="a" style="left:1363.5px;top:198px;width:1px;height:6px;background:#666"></div>
<div class="t" style="left:1363.1px;top:195px;width:20px;text-align:center;font-size:10px;color:#555;line-height:12px">34</div>
<div class="a" style="left:1381.7px;top:198px;width:1px;height:6px;background:#666"></div>
<div class="a" style="left:1400.0px;top:198px;width:1px;height:6px;background:#666"></div>
<div class="t" style="left:1399.6px;top:195px;width:20px;text-align:center;font-size:10px;color:#555;line-height:12px">36</div>
<div class="a" style="left:1418.2px;top:198px;width:1px;height:6px;background:#666"></div>
<div class="a" style="left:1436.4px;top:198px;width:1px;height:6px;background:#666"></div>
<div class="t" style="left:1436.0px;top:195px;width:20px;text-align:center;font-size:10px;color:#555;line-height:12px">38</div>
<div class="a" style="left:1454.7px;top:198px;width:1px;height:6px;background:#666"></div>
<div class="a" style="left:1472.9px;top:198px;width:1px;height:6px;background:#666"></div>
<div class="t" style="left:1472.5px;top:195px;width:20px;text-align:center;font-size:10px;color:#555;line-height:12px">40</div>
<div class="a" style="left:1491.1px;top:198px;width:1px;height:6px;background:#666"></div>
<div class="a" style="left:1509.3px;top:198px;width:1px;height:6px;background:#666"></div>
<div class="t" style="left:1509.0px;top:195px;width:20px;text-align:center;font-size:10px;color:#555;line-height:12px">42</div>
<div class="a" style="left:1527.6px;top:198px;width:1px;height:6px;background:#666"></div>
<div class="a" style="left:1545.8px;top:198px;width:1px;height:6px;background:#666"></div>
<div class="t" style="left:1545.4px;top:195px;width:20px;text-align:center;font-size:10px;color:#555;line-height:12px">44</div>
<div class="a" style="left:1564.0px;top:198px;width:1px;height:6px;background:#666"></div>
<div class="a" style="left:1582.3px;top:198px;width:1px;height:6px;background:#666"></div>
<div class="t" style="left:1581.9px;top:195px;width:20px;text-align:center;font-size:10px;color:#555;line-height:12px">46</div>
<div class="a" style="left:1600.5px;top:198px;width:1px;height:6px;background:#666"></div>
<div class="a" style="left:1618.7px;top:198px;width:1px;height:6px;background:#666"></div>
<div class="t" style="left:1618.3px;top:195px;width:20px;text-align:center;font-size:10px;color:#555;line-height:12px">48</div>
<div class="a" style="left:1637.0px;top:198px;width:1px;height:6px;background:#666"></div>
<div class="a" style="left:1655.2px;top:198px;width:1px;height:6px;background:#666"></div>
<svg class="a" style="left:747px;top:189px" width="12" height="28" viewBox="0 0 12 28"><path d="M0.5 0.5 H10.5 V3.5 L5.5 11 L0.5 3.5 Z" fill="#fff" stroke="#777"/><path d="M5.5 11 L10.5 18.5 V19.5 H0.5 V18.5 Z" fill="#fff" stroke="#777"/><rect x="0.5" y="19.5" width="10" height="7.5" fill="#fff" stroke="#777"/></svg>
<svg class="a" style="left:1535px;top:200px" width="12" height="10" viewBox="0 0 12 10"><path d="M5.5 0.5 L10.5 6 V9.5 H0.5 V6 Z" fill="#fff" stroke="#777"/></svg>
<div class="a" style="left:1910px;top:219px;width:15px;height:797px;background:#f2f2f2"></div>
<div class="a" style="left:1910px;top:219px;width:15px;height:15px;background:#fff;border:1px solid #a0a0a0"></div>
<svg class="a" style="left:1913px;top:224px" width="9" height="5" viewBox="0 0 9 5"><path d="M0 5 H9 L4.5 0 Z" fill="#222"/></svg>
<div class="a" style="left:1910px;top:373px;width:15px;height:17px;background:#fff;border:1px solid #a0a0a0"></div>
<div class="a" style="left:1910px;top:999px;width:15px;height:14px;background:#fff;border:1px solid #a0a0a0"></div>
<svg class="a" style="left:1913px;top:1004px" width="9" height="5" viewBox="0 0 9 5"><path d="M0 0 H9 L4.5 5 Z" fill="#222"/></svg>
<div class="a" style="left:800px;top:217px;width:620px;height:2px;background:repeating-linear-gradient(90deg,#b8b8b8 0 4px,transparent 4px 8px);opacity:0.6"></div>
<!-- doc content -->
<svg class="a" style="left:797.5px;top:224px" width="82" height="82" viewBox="0 0 25 25" shape-rendering="crispEdges"><g fill="#000"><rect x="0" y="0" width="1.02" height="1.02"/><rect x="1" y="0" width="1.02" height="1.02"/><rect x="2" y="0" width="1.02" height="1.02"/><rect x="3" y="0" width="1.02" height="1.02"/><rect x="4" y="0" width="1.02" height="1.02"/><rect x="5" y="0" width="1.02" height="1.02"/><rect x="6" y="0" width="1.02" height="1.02"/><rect x="8" y="0" width="1.02" height="1.02"/><rect x="9" y="0" width="1.02" height="1.02"/><rect x="10" y="0" width="1.02" height="1.02"/><rect x="11" y="0" width="1.02" height="1.02"/><rect x="12" y="0" width="1.02" height="1.02"/><rect x="14" y="0" width="1.02" height="1.02"/><rect x="15" y="0" width="1.02" height="1.02"/><rect x="18" y="0" width="1.02" height="1.02"/><rect x="19" y="0" width="1.02" height="1.02"/><rect x="20" y="0" width="1.02" height="1.02"/><rect x="21" y="0" width="1.02" height="1.02"/><rect x="22" y="0" width="1.02" height="1.02"/><rect x="23" y="0" width="1.02" height="1.02"/><rect x="24" y="0" width="1.02" height="1.02"/><rect x="0" y="1" width="1.02" height="1.02"/><rect x="6" y="1" width="1.02" height="1.02"/><rect x="8" y="1" width="1.02" height="1.02"/><rect x="9" y="1" width="1.02" height="1.02"/><rect x="10" y="1" width="1.02" height="1.02"/><rect x="12" y="1" width="1.02" height="1.02"/><rect x="13" y="1" width="1.02" height="1.02"/><rect x="15" y="1" width="1.02" height="1.02"/><rect x="16" y="1" width="1.02" height="1.02"/><rect x="18" y="1" width="1.02" height="1.02"/><rect x="24" y="1" width="1.02" height="1.02"/><rect x="0" y="2" width="1.02" height="1.02"/><rect x="2" y="2" width="1.02" height="1.02"/><rect x="3" y="2" width="1.02" height="1.02"/><rect x="4" y="2" width="1.02" height="1.02"/><rect x="6" y="2" width="1.02" height="1.02"/><rect x="11" y="2" width="1.02" height="1.02"/><rect x="15" y="2" width="1.02" height="1.02"/><rect x="18" y="2" width="1.02" height="1.02"/><rect x="20" y="2" width="1.02" height="1.02"/><rect x="21" y="2" width="1.02" height="1.02"/><rect x="22" y="2" width="1.02" height="1.02"/><rect x="24" y="2" width="1.02" height="1.02"/><rect x="0" y="3" width="1.02" height="1.02"/><rect x="2" y="3" width="1.02" height="1.02"/><rect x="3" y="3" width="1.02" height="1.02"/><rect x="4" y="3" width="1.02" height="1.02"/><rect x="6" y="3" width="1.02" height="1.02"/><rect x="9" y="3" width="1.02" height="1.02"/><rect x="10" y="3" width="1.02" height="1.02"/><rect x="11" y="3" width="1.02" height="1.02"/><rect x="13" y="3" width="1.02" height="1.02"/><rect x="14" y="3" width="1.02" height="1.02"/><rect x="18" y="3" width="1.02" height="1.02"/><rect x="20" y="3" width="1.02" height="1.02"/><rect x="21" y="3" width="1.02" height="1.02"/><rect x="22" y="3" width="1.02" height="1.02"/><rect x="24" y="3" width="1.02" height="1.02"/><rect x="0" y="4" width="1.02" height="1.02"/><rect x="2" y="4" width="1.02" height="1.02"/><rect x="3" y="4" width="1.02" height="1.02"/><rect x="4" y="4" width="1.02" height="1.02"/><rect x="6" y="4" width="1.02" height="1.02"/><rect x="8" y="4" width="1.02" height="1.02"/><rect x="15" y="4" width="1.02" height="1.02"/><rect x="18" y="4" width="1.02" height="1.02"/><rect x="20" y="4" width="1.02" height="1.02"/><rect x="21" y="4" width="1.02" height="1.02"/><rect x="22" y="4" width="1.02" height="1.02"/><rect x="24" y="4" width="1.02" height="1.02"/><rect x="0" y="5" width="1.02" height="1.02"/><rect x="6" y="5" width="1.02" height="1.02"/><rect x="8" y="5" width="1.02" height="1.02"/><rect x="9" y="5" width="1.02" height="1.02"/><rect x="12" y="5" width="1.02" height="1.02"/><rect x="13" y="5" width="1.02" height="1.02"/><rect x="14" y="5" width="1.02" height="1.02"/><rect x="15" y="5" width="1.02" height="1.02"/><rect x="16" y="5" width="1.02" height="1.02"/><rect x="18" y="5" width="1.02" height="1.02"/><rect x="24" y="5" width="1.02" height="1.02"/><rect x="0" y="6" width="1.02" height="1.02"/><rect x="1" y="6" width="1.02" height="1.02"/><rect x="2" y="6" width="1.02" height="1.02"/><rect x="3" y="6" width="1.02" height="1.02"/><rect x="4" y="6" width="1.02" height="1.02"/><rect x="5" y="6" width="1.02" height="1.02"/><rect x="6" y="6" width="1.02" height="1.02"/><rect x="8" y="6" width="1.02" height="1.02"/><rect x="10" y="6" width="1.02" height="1.02"/><rect x="12" y="6" width="1.02" height="1.02"/><rect x="14" y="6" width="1.02" height="1.02"/><rect x="16" y="6" width="1.02" height="1.02"/><rect x="18" y="6" width="1.02" height="1.02"/><rect x="19" y="6" width="1.02" height="1.02"/><rect x="20" y="6" width="1.02" height="1.02"/><rect x="21" y="6" width="1.02" height="1.02"/><rect x="22" y="6" width="1.02" height="1.02"/><rect x="23" y="6" width="1.02" height="1.02"/><rect x="24" y="6" width="1.02" height="1.02"/><rect x="10" y="7" width="1.02" height="1.02"/><rect x="14" y="7" width="1.02" height="1.02"/><rect x="15" y="7" width="1.02" height="1.02"/><rect x="16" y="7" width="1.02" height="1.02"/><rect x="0" y="8" width="1.02" height="1.02"/><rect x="5" y="8" width="1.02" height="1.02"/><rect x="6" y="8" width="1.02" height="1.02"/><rect x="8" y="8" width="1.02" height="1.02"/><rect x="11" y="8" width="1.02" height="1.02"/><rect x="12" y="8" width="1.02" height="1.02"/><rect x="15" y="8" width="1.02" height="1.02"/><rect x="16" y="8" width="1.02" height="1.02"/><rect x="17" y="8" width="1.02" height="1.02"/><rect x="20" y="8" width="1.02" height="1.02"/><rect x="24" y="8" width="1.02" height="1.02"/><rect x="1" y="9" width="1.02" height="1.02"/><rect x="2" y="9" width="1.02" height="1.02"/><rect x="7" y="9" width="1.02" height="1.02"/><rect x="10" y="9" width="1.02" height="1.02"/><rect x="11" y="9" width="1.02" height="1.02"/><rect x="12" y="9" width="1.02" height="1.02"/><rect x="13" y="9" width="1.02" height="1.02"/><rect x="15" y="9" width="1.02" height="1.02"/><rect x="16" y="9" width="1.02" height="1.02"/><rect x="17" y="9" width="1.02" height="1.02"/><rect x="19" y="9" width="1.02" height="1.02"/><rect x="20" y="9" width="1.02" height="1.02"/><rect x="23" y="9" width="1.02" height="1.02"/><rect x="3" y="10" width="1.02" height="1.02"/><rect x="4" y="10" width="1.02" height="1.02"/><rect x="5" y="10" width="1.02" height="1.02"/><rect x="6" y="10" width="1.02" height="1.02"/><rect x="8" y="10" width="1.02" height="1.02"/><rect x="9" y="10" width="1.02" height="1.02"/><rect x="12" y="10" width="1.02" height="1.02"/><rect x="16" y="10" width="1.02" height="1.02"/><rect x="18" y="10" width="1.02" height="1.02"/><rect x="19" y="10" width="1.02" height="1.02"/><rect x="0" y="11" width="1.02" height="1.02"/><rect x="5" y="11" width="1.02" height="1.02"/><rect x="7" y="11" width="1.02" height="1.02"/><rect x="12" y="11" width="1.02" height="1.02"/><rect x="16" y="11" width="1.02" height="1.02"/><rect x="17" y="11" width="1.02" height="1.02"/><rect x="18" y="11" width="1.02" height="1.02"/><rect x="19" y="11" width="1.02" height="1.02"/><rect x="20" y="11" width="1.02" height="1.02"/><rect x="21" y="11" width="1.02" height="1.02"/><rect x="0" y="12" width="1.02" height="1.02"/><rect x="3" y="12" width="1.02" height="1.02"/><rect x="6" y="12" width="1.02" height="1.02"/><rect x="8" y="12" width="1.02" height="1.02"/><rect x="9" y="12" width="1.02" height="1.02"/><rect x="12" y="12" width="1.02" height="1.02"/><rect x="13" y="12" width="1.02" height="1.02"/><rect x="15" y="12" width="1.02" height="1.02"/><rect x="16" y="12" width="1.02" height="1.02"/><rect x="17" y="12" width="1.02" height="1.02"/><rect x="19" y="12" width="1.02" height="1.02"/><rect x="21" y="12" width="1.02" height="1.02"/><rect x="22" y="12" width="1.02" height="1.02"/><rect x="23" y="12" width="1.02" height="1.02"/><rect x="1" y="13" width="1.02" height="1.02"/><rect x="5" y="13" width="1.02" height="1.02"/><rect x="7" y="13" width="1.02" height="1.02"/><rect x="9" y="13" width="1.02" height="1.02"/><rect x="10" y="13" width="1.02" height="1.02"/><rect x="11" y="13" width="1.02" height="1.02"/><rect x="14" y="13" width="1.02" height="1.02"/><rect x="15" y="13" width="1.02" height="1.02"/><rect x="19" y="13" width="1.02" height="1.02"/><rect x="20" y="13" width="1.02" height="1.02"/><rect x="22" y="13" width="1.02" height="1.02"/><rect x="23" y="13" width="1.02" height="1.02"/><rect x="2" y="14" width="1.02" height="1.02"/><rect x="4" y="14" width="1.02" height="1.02"/><rect x="6" y="14" width="1.02" height="1.02"/><rect x="7" y="14" width="1.02" height="1.02"/><rect x="10" y="14" width="1.02" height="1.02"/><rect x="11" y="14" width="1.02" height="1.02"/><rect x="13" y="14" width="1.02" height="1.02"/><rect x="14" y="14" width="1.02" height="1.02"/><rect x="15" y="14" width="1.02" height="1.02"/><rect x="16" y="14" width="1.02" height="1.02"/><rect x="17" y="14" width="1.02" height="1.02"/><rect x="18" y="14" width="1.02" height="1.02"/><rect x="19" y="14" width="1.02" height="1.02"/><rect x="21" y="14" width="1.02" height="1.02"/><rect x="23" y="14" width="1.02" height="1.02"/><rect x="24" y="14" width="1.02" height="1.02"/><rect x="0" y="15" width="1.02" height="1.02"/><rect x="1" y="15" width="1.02" height="1.02"/><rect x="2" y="15" width="1.02" height="1.02"/><rect x="5" y="15" width="1.02" height="1.02"/><rect x="8" y="15" width="1.02" height="1.02"/><rect x="10" y="15" width="1.02" height="1.02"/><rect x="11" y="15" width="1.02" height="1.02"/><rect x="13" y="15" width="1.02" height="1.02"/><rect x="17" y="15" width="1.02" height="1.02"/><rect x="21" y="15" width="1.02" height="1.02"/><rect x="22" y="15" width="1.02" height="1.02"/><rect x="23" y="15" width="1.02" height="1.02"/><rect x="24" y="15" width="1.02" height="1.02"/><rect x="0" y="16" width="1.02" height="1.02"/><rect x="2" y="16" width="1.02" height="1.02"/><rect x="3" y="16" width="1.02" height="1.02"/><rect x="4" y="16" width="1.02" height="1.02"/><rect x="6" y="16" width="1.02" height="1.02"/><rect x="8" y="16" width="1.02" height="1.02"/><rect x="9" y="16" width="1.02" height="1.02"/><rect x="10" y="16" width="1.02" height="1.02"/><rect x="11" y="16" width="1.02" height="1.02"/><rect x="12" y="16" width="1.02" height="1.02"/><rect x="13" y="16" width="1.02" height="1.02"/><rect x="14" y="16" width="1.02" height="1.02"/><rect x="16" y="16" width="1.02" height="1.02"/><rect x="17" y="16" width="1.02" height="1.02"/><rect x="18" y="16" width="1.02" height="1.02"/><rect x="19" y="16" width="1.02" height="1.02"/><rect x="20" y="16" width="1.02" height="1.02"/><rect x="21" y="16" width="1.02" height="1.02"/><rect x="22" y="16" width="1.02" height="1.02"/><rect x="23" y="16" width="1.02" height="1.02"/><rect x="24" y="16" width="1.02" height="1.02"/><rect x="8" y="17" width="1.02" height="1.02"/><rect x="9" y="17" width="1.02" height="1.02"/><rect x="10" y="17" width="1.02" height="1.02"/><rect x="16" y="17" width="1.02" height="1.02"/><rect x="20" y="17" width="1.02" height="1.02"/><rect x="23" y="17" width="1.02" height="1.02"/><rect x="0" y="18" width="1.02" height="1.02"/><rect x="1" y="18" width="1.02" height="1.02"/><rect x="2" y="18" width="1.02" height="1.02"/><rect x="3" y="18" width="1.02" height="1.02"/><rect x="4" y="18" width="1.02" height="1.02"/><rect x="5" y="18" width="1.02" height="1.02"/><rect x="6" y="18" width="1.02" height="1.02"/><rect x="14" y="18" width="1.02" height="1.02"/><rect x="15" y="18" width="1.02" height="1.02"/><rect x="16" y="18" width="1.02" height="1.02"/><rect x="18" y="18" width="1.02" height="1.02"/><rect x="20" y="18" width="1.02" height="1.02"/><rect x="24" y="18" width="1.02" height="1.02"/><rect x="0" y="19" width="1.02" height="1.02"/><rect x="6" y="19" width="1.02" height="1.02"/><rect x="8" y="19" width="1.02" height="1.02"/><rect x="9" y="19" width="1.02" height="1.02"/><rect x="10" y="19" width="1.02" height="1.02"/><rect x="12" y="19" width="1.02" height="1.02"/><rect x="15" y="19" width="1.02" height="1.02"/><rect x="16" y="19" width="1.02" height="1.02"/><rect x="20" y="19" width="1.02" height="1.02"/><rect x="22" y="19" width="1.02" height="1.02"/><rect x="23" y="19" width="1.02" height="1.02"/><rect x="24" y="19" width="1.02" height="1.02"/><rect x="0" y="20" width="1.02" height="1.02"/><rect x="2" y="20" width="1.02" height="1.02"/><rect x="3" y="20" width="1.02" height="1.02"/><rect x="4" y="20" width="1.02" height="1.02"/><rect x="6" y="20" width="1.02" height="1.02"/><rect x="9" y="20" width="1.02" height="1.02"/><rect x="11" y="20" width="1.02" height="1.02"/><rect x="12" y="20" width="1.02" height="1.02"/><rect x="13" y="20" width="1.02" height="1.02"/><rect x="15" y="20" width="1.02" height="1.02"/><rect x="16" y="20" width="1.02" height="1.02"/><rect x="17" y="20" width="1.02" height="1.02"/><rect x="18" y="20" width="1.02" height="1.02"/><rect x="19" y="20" width="1.02" height="1.02"/><rect x="20" y="20" width="1.02" height="1.02"/><rect x="22" y="20" width="1.02" height="1.02"/><rect x="23" y="20" width="1.02" height="1.02"/><rect x="24" y="20" width="1.02" height="1.02"/><rect x="0" y="21" width="1.02" height="1.02"/><rect x="2" y="21" width="1.02" height="1.02"/><rect x="3" y="21" width="1.02" height="1.02"/><rect x="4" y="21" width="1.02" height="1.02"/><rect x="6" y="21" width="1.02" height="1.02"/><rect x="11" y="21" width="1.02" height="1.02"/><rect x="13" y="21" width="1.02" height="1.02"/><rect x="14" y="21" width="1.02" height="1.02"/><rect x="15" y="21" width="1.02" height="1.02"/><rect x="16" y="21" width="1.02" height="1.02"/><rect x="17" y="21" width="1.02" height="1.02"/><rect x="18" y="21" width="1.02" height="1.02"/><rect x="19" y="21" width="1.02" height="1.02"/><rect x="20" y="21" width="1.02" height="1.02"/><rect x="21" y="21" width="1.02" height="1.02"/><rect x="23" y="21" width="1.02" height="1.02"/><rect x="0" y="22" width="1.02" height="1.02"/><rect x="2" y="22" width="1.02" height="1.02"/><rect x="3" y="22" width="1.02" height="1.02"/><rect x="4" y="22" width="1.02" height="1.02"/><rect x="6" y="22" width="1.02" height="1.02"/><rect x="10" y="22" width="1.02" height="1.02"/><rect x="11" y="22" width="1.02" height="1.02"/><rect x="12" y="22" width="1.02" height="1.02"/><rect x="13" y="22" width="1.02" height="1.02"/><rect x="14" y="22" width="1.02" height="1.02"/><rect x="16" y="22" width="1.02" height="1.02"/><rect x="18" y="22" width="1.02" height="1.02"/><rect x="19" y="22" width="1.02" height="1.02"/><rect x="21" y="22" width="1.02" height="1.02"/><rect x="22" y="22" width="1.02" height="1.02"/><rect x="0" y="23" width="1.02" height="1.02"/><rect x="6" y="23" width="1.02" height="1.02"/><rect x="8" y="23" width="1.02" height="1.02"/><rect x="11" y="23" width="1.02" height="1.02"/><rect x="12" y="23" width="1.02" height="1.02"/><rect x="14" y="23" width="1.02" height="1.02"/><rect x="15" y="23" width="1.02" height="1.02"/><rect x="16" y="23" width="1.02" height="1.02"/><rect x="17" y="23" width="1.02" height="1.02"/><rect x="20" y="23" width="1.02" height="1.02"/><rect x="22" y="23" width="1.02" height="1.02"/><rect x="24" y="23" width="1.02" height="1.02"/><rect x="0" y="24" width="1.02" height="1.02"/><rect x="1" y="24" width="1.02" height="1.02"/><rect x="2" y="24" width="1.02" height="1.02"/><rect x="3" y="24" width="1.02" height="1.02"/><rect x="4" y="24" width="1.02" height="1.02"/><rect x="5" y="24" width="1.02" height="1.02"/><rect x="6" y="24" width="1.02" height="1.02"/><rect x="8" y="24" width="1.02" height="1.02"/><rect x="9" y="24" width="1.02" height="1.02"/><rect x="10" y="24" width="1.02" height="1.02"/><rect x="11" y="24" width="1.02" height="1.02"/><rect x="12" y="24" width="1.02" height="1.02"/><rect x="13" y="24" width="1.02" height="1.02"/><rect x="14" y="24" width="1.02" height="1.02"/><rect x="15" y="24" width="1.02" height="1.02"/><rect x="19" y="24" width="1.02" height="1.02"/><rect x="20" y="24" width="1.02" height="1.02"/><rect x="22" y="24" width="1.02" height="1.02"/><rect x="23" y="24" width="1.02" height="1.02"/><rect x="24" y="24" width="1.02" height="1.02"/></g></svg>
<div class="t doc" style="left:974.5px;top:318px;font-size:27px;letter-spacing:2.05px;color:#222;transform:scaleY(0.93);transform-origin:0 0">辽宁省社会保险个人参保证明</div>
<div class="t doc" style="left:776px;top:384px;font-size:18px;letter-spacing:1.4px;color:#404040">王飞雨（社保编码：</div>
<div class="t doc" style="left:953.5px;top:381.5px;font-size:21px;transform:scaleX(0.88);transform-origin:0 0;font-family:Liberation Serif,serif;color:#111;-webkit-text-stroke:0.35px #111">21112170458306</div>
<div class="t doc" style="left:1084px;top:384px;font-size:18px;color:#404040;font-family:Liberation Serif,serif">,</div>
<div class="t doc" style="left:1104px;top:384px;font-size:18px;letter-spacing:1.4px;color:#404040">证件号码：</div>
<div class="t doc" style="left:1203px;top:381.5px;font-size:21px;transform:scaleX(0.895);transform-origin:0 0;font-family:Liberation Serif,serif;color:#111;-webkit-text-stroke:0.35px #111">211121199404290066</div>
<div class="t doc" style="left:1371px;top:384px;font-size:18px;letter-spacing:1.4px;color:#404040">）企业职工基本养老</div>
<div class="t doc" style="left:776px;top:405px;font-size:18px;letter-spacing:1.4px;color:#404040">保险(正常参保)、工伤保险(正常参保)。</div>
<div class="t doc" style="left:1260px;top:450px;font-size:14.5px;letter-spacing:2.6px;color:#404040">社保经办机构（盖章）</div>
<div class="t doc" style="left:1252px;top:473px;font-size:14.5px;letter-spacing:1.8px;color:#404040">打印时间：2025年6月3日</div>
<div class="a" style="left:774.0px;top:491.0px;width:777.4px;height:2px;background:#111"></div>
<div class="a" style="left:774.0px;top:549.5px;width:777.4px;height:2px;background:#111"></div>
<div class="a" style="left:774.0px;top:633.0px;width:777.4px;height:2px;background:#111"></div>
<div class="a" style="left:774.0px;top:716.0px;width:777.4px;height:2px;background:#111"></div>
<div class="a" style="left:774.0px;top:799.1px;width:777.4px;height:2px;background:#111"></div>
<div class="a" style="left:849.7px;top:577.9px;width:701.7px;height:2px;background:#111"></div>
<div class="a" style="left:849.7px;top:605.5px;width:701.7px;height:2px;background:#111"></div>
<div class="a" style="left:849.7px;top:660.5px;width:701.7px;height:2px;background:#111"></div>
<div class="a" style="left:849.7px;top:688.4px;width:701.7px;height:2px;background:#111"></div>
<div class="a" style="left:849.7px;top:743.3px;width:701.7px;height:2px;background:#111"></div>
<div class="a" style="left:849.7px;top:771.8px;width:701.7px;height:2px;background:#111"></div>
<div class="a" style="left:774.0px;top:491.0px;width:2px;height:310.1px;background:#111"></div>
<div class="a" style="left:1549.4px;top:491.0px;width:2px;height:310.1px;background:#111"></div>
<div class="a" style="left:849.7px;top:549.5px;width:2px;height:251.6px;background:#111"></div>
<div class="a" style="left:981.2px;top:549.5px;width:2px;height:58.0px;background:#111"></div>
<div class="a" style="left:1132.8px;top:549.5px;width:2px;height:58.0px;background:#111"></div>
<div class="a" style="left:1439.2px;top:549.5px;width:2px;height:85.5px;background:#111"></div>
<div class="a" style="left:981.2px;top:633.0px;width:2px;height:57.4px;background:#111"></div>
<div class="a" style="left:1132.8px;top:633.0px;width:2px;height:57.4px;background:#111"></div>
<div class="a" style="left:1439.2px;top:633.0px;width:2px;height:85.0px;background:#111"></div>
<div class="a" style="left:981.2px;top:716.0px;width:2px;height:57.8px;background:#111"></div>
<div class="a" style="left:1132.8px;top:716.0px;width:2px;height:57.8px;background:#111"></div>
<div class="a" style="left:1439.2px;top:716.0px;width:2px;height:85.1px;background:#111"></div>
<div class="a doc" style="left:776px;top:488.0px;width:775px;height:58.0px;display:flex;align-items:center;justify-content:center;white-space:nowrap;font-size:19px;letter-spacing:1px;color:#404040">全部参保情况</div>
<div class="a doc" style="left:775px;top:547.0px;width:76px;height:83.5px;display:flex;align-items:center;justify-content:center;white-space:nowrap;font-size:16.5px;letter-spacing:1px;color:#404040">养老保险</div>
<div class="a doc" style="left:851px;top:547.0px;width:131px;height:28.4px;display:flex;align-items:center;justify-content:center;white-space:nowrap;font-size:16px;letter-spacing:1.5px;color:#404040">起止年月</div>
<div class="a doc" style="left:982px;top:547.0px;width:152px;height:28.4px;display:flex;align-items:center;justify-content:center;white-space:nowrap;font-size:16px;letter-spacing:1.5px;color:#404040">参保地</div>
<div class="a doc" style="left:1134px;top:547.0px;width:306px;height:28.4px;display:flex;align-items:center;justify-content:center;white-space:nowrap;font-size:16px;letter-spacing:1.5px;color:#404040">单位名称</div>
<div class="a doc" style="left:1440px;top:547.0px;width:110px;height:28.4px;display:flex;align-items:center;justify-content:center;white-space:nowrap;font-size:16px;letter-spacing:1px;color:#404040">实际缴费月数</div>
<div class="a doc" style="left:850px;top:577.4px;width:131px;height:27.6px;display:flex;align-items:center;justify-content:center;white-space:nowrap;color:#222"><span style="display:inline-block;font-family:Liberation Serif,serif;font-size:20px;transform:scaleX(0.74);letter-spacing:0.6px;">201508-202505</span></div>
<div class="a doc" style="left:982px;top:575.9px;width:152px;height:27.6px;display:flex;align-items:center;justify-content:center;white-space:nowrap;font-size:15px;color:#404040">兴隆台区</div>
<div class="a doc" style="left:1134px;top:575.9px;width:306px;height:27.6px;display:flex;align-items:center;justify-content:center;white-space:nowrap;font-size:15px;color:#404040">辽宁东禹交通设施工程有限公司</div>
<div class="a doc" style="left:1440px;top:577.4px;width:110px;height:27.6px;display:flex;align-items:center;justify-content:center;white-space:nowrap;color:#222"><span style="display:inline-block;font-family:Liberation Serif,serif;font-size:20px;transform:scaleX(0.85);letter-spacing:3px;-webkit-text-stroke:0.4px #222">67</span></div>
<div class="t doc" style="left:1110px;top:611.5px;font-size:15px;color:#404040">小</div>
<div class="t doc" style="left:1164px;top:611.5px;font-size:15px;color:#404040">计</div>
<div class="a doc" style="left:1440px;top:605.0px;width:110px;height:27.5px;display:flex;align-items:center;justify-content:center;white-space:nowrap;color:#222"><span style="display:inline-block;font-family:Liberation Serif,serif;font-size:20px;transform:scaleX(0.85);letter-spacing:3px;-webkit-text-stroke:0.4px #222">67</span></div>
<div class="a doc" style="left:775px;top:630.5px;width:76px;height:83.0px;display:flex;align-items:center;justify-content:center;white-space:nowrap;font-size:16.5px;letter-spacing:1px;color:#404040">工伤保险</div>
<div class="a doc" style="left:851px;top:630.5px;width:131px;height:27.5px;display:flex;align-items:center;justify-content:center;white-space:nowrap;font-size:16px;letter-spacing:1.5px;color:#404040">起止年月</div>
<div class="a doc" style="left:982px;top:630.5px;width:152px;height:27.5px;display:flex;align-items:center;justify-content:center;white-space:nowrap;font-size:16px;letter-spacing:1.5px;color:#404040">参保地</div>
<div class="a doc" style="left:1134px;top:630.5px;width:306px;height:27.5px;display:flex;align-items:center;justify-content:center;white-space:nowrap;font-size:16px;letter-spacing:1.5px;color:#404040">单位名称</div>
<div class="a doc" style="left:1440px;top:630.5px;width:110px;height:27.5px;display:flex;align-items:center;justify-content:center;white-space:nowrap;font-size:16px;letter-spacing:1px;color:#404040">实际缴费月数</div>
<div class="a doc" style="left:850px;top:660.0px;width:131px;height:27.9px;display:flex;align-items:center;justify-content:center;white-space:nowrap;color:#222"><span style="display:inline-block;font-family:Liberation Serif,serif;font-size:20px;transform:scaleX(0.74);letter-spacing:0.6px;">202304-202505</span></div>
<div class="a doc" style="left:982px;top:658.5px;width:152px;height:27.9px;display:flex;align-items:center;justify-content:center;white-space:nowrap;font-size:15px;color:#404040">兴隆台区</div>
<div class="a doc" style="left:1134px;top:658.5px;width:306px;height:27.9px;display:flex;align-items:center;justify-content:center;white-space:nowrap;font-size:15px;color:#404040">辽宁东禹交通设施工程有限公司</div>
<div class="a doc" style="left:1440px;top:660.0px;width:110px;height:27.9px;display:flex;align-items:center;justify-content:center;white-space:nowrap;color:#222"><span style="display:inline-block;font-family:Liberation Serif,serif;font-size:20px;transform:scaleX(0.85);letter-spacing:3px;-webkit-text-stroke:0.4px #222">24</span></div>
<div class="t doc" style="left:1110px;top:694.4px;font-size:15px;color:#404040">小</div>
<div class="t doc" style="left:1164px;top:694.4px;font-size:15px;color:#404040">计</div>
<div class="a doc" style="left:1440px;top:687.9px;width:110px;height:27.6px;display:flex;align-items:center;justify-content:center;white-space:nowrap;color:#222"><span style="display:inline-block;font-family:Liberation Serif,serif;font-size:20px;transform:scaleX(0.85);letter-spacing:3px;-webkit-text-stroke:0.4px #222">24</span></div>
<div class="a doc" style="left:775px;top:713.5px;width:76px;height:83.1px;display:flex;align-items:center;justify-content:center;white-space:nowrap;font-size:16.5px;letter-spacing:1px;color:#404040">失业保险</div>
<div class="a doc" style="left:851px;top:713.5px;width:131px;height:27.3px;display:flex;align-items:center;justify-content:center;white-space:nowrap;font-size:16px;letter-spacing:1.5px;color:#404040">起止年月</div>
<div class="a doc" style="left:982px;top:713.5px;width:152px;height:27.3px;display:flex;align-items:center;justify-content:center;white-space:nowrap;font-size:16px;letter-spacing:1.5px;color:#404040">参保地</div>
<div class="a doc" style="left:1134px;top:713.5px;width:306px;height:27.3px;display:flex;align-items:center;justify-content:center;white-space:nowrap;font-size:16px;letter-spacing:1.5px;color:#404040">单位名称</div>
<div class="a doc" style="left:1440px;top:713.5px;width:110px;height:27.3px;display:flex;align-items:center;justify-content:center;white-space:nowrap;font-size:16px;letter-spacing:1px;color:#404040">实际缴费月数</div>
<div class="a doc" style="left:850px;top:742.8px;width:131px;height:28.5px;display:flex;align-items:center;justify-content:center;white-space:nowrap;color:#222"><span style="display:inline-block;font-family:Liberation Serif,serif;font-size:20px;transform:scaleX(0.74);letter-spacing:0.6px;">201508-202505</span></div>
<div class="a doc" style="left:982px;top:741.3px;width:152px;height:28.5px;display:flex;align-items:center;justify-content:center;white-space:nowrap;font-size:15px;color:#404040">兴隆台区</div>
<div class="a doc" style="left:1134px;top:741.3px;width:306px;height:28.5px;display:flex;align-items:center;justify-content:center;white-space:nowrap;font-size:15px;color:#404040">辽宁东禹交通设施工程有限公司</div>
<div class="a doc" style="left:1440px;top:742.8px;width:110px;height:28.5px;display:flex;align-items:center;justify-content:center;white-space:nowrap;color:#222"><span style="display:inline-block;font-family:Liberation Serif,serif;font-size:20px;transform:scaleX(0.85);letter-spacing:3px;-webkit-text-stroke:0.4px #222">67</span></div>
<div class="t doc" style="left:1110px;top:777.8px;font-size:15px;color:#404040">小</div>
<div class="t doc" style="left:1164px;top:777.8px;font-size:15px;color:#404040">计</div>
<div class="a doc" style="left:1440px;top:771.3px;width:110px;height:27.3px;display:flex;align-items:center;justify-content:center;white-space:nowrap;color:#222"><span style="display:inline-block;font-family:Liberation Serif,serif;font-size:20px;transform:scaleX(0.85);letter-spacing:3px;-webkit-text-stroke:0.4px #222">67</span></div>
<div class="a" style="left:850.3px;top:570.8px;width:155.1px;height:25.9px;border:3px solid #cc1628"></div>
<div class="a" style="left:862.6px;top:658px;width:121.4px;height:24.0px;border:3px solid #cc1628"></div>
<div class="a" style="left:875.6px;top:745.5px;width:118.3px;height:33.5px;border:3px solid #cc1628"></div>
<div class="t doc" style="left:776px;top:839px;font-size:16px;color:#404040">备注:</div>
<div class="t doc" style="left:776px;top:862px;font-size:16.5px;letter-spacing:-0.3px;color:#404040">1.本证明信息为打印时当前参保情况。今后发生变更的，以变更后的信息为准。</div>
<div class="t doc" style="left:776px;top:885px;font-size:16.5px;letter-spacing:-0.3px;color:#404040">2.本参保证明已签署经国家电子政务外网辽宁省电子认证注册的机构认证的电子印章，社保经办机构不再</div>
<div class="t doc" style="left:776px;top:905px;font-size:16.5px;letter-spacing:-0.3px;color:#404040">另行签章。</div>
<div class="t doc" style="left:776px;top:929px;font-size:16.5px;letter-spacing:-0.3px;color:#404040">3.本参保证明最终解释权由参保地社保经办机构所有。</div>
<div class="t doc" style="left:776px;top:953px;font-size:16.5px;letter-spacing:-0.3px;color:#404040">4.本参保证明请妥善保管，因保管不当等原因造成信息泄露等情况，由个人承担。</div>
<!-- seals -->
<svg class="a" style="left:1200px;top:405.5px;mix-blend-mode:multiply" width="161" height="161" viewBox="0 0 161 161"><circle cx="80.5" cy="80.5" r="78.4" fill="none" stroke="#f5141c" stroke-width="3.2"/><g transform="rotate(-121.0 80.5 80.5) translate(80.5 18.5) scale(0.8 1.15)"><text x="0" y="0" text-anchor="middle" dominant-baseline="central" font-size="19" font-weight="bold" fill="#f5141c" font-family="Liberation Sans">盘</text></g><g transform="rotate(-101.0 80.5 80.5) translate(80.5 18.5) scale(0.8 1.15)"><text x="0" y="0" text-anchor="middle" dominant-baseline="central" font-size="19" font-weight="bold" fill="#f5141c" font-family="Liberation Sans">锦</text></g><g transform="rotate(-81.0 80.5 80.5) translate(80.5 18.5) scale(0.8 1.15)"><text x="0" y="0" text-anchor="middle" dominant-baseline="central" font-size="19" font-weight="bold" fill="#f5141c" font-family="Liberation Sans">市</text></g><g transform="rotate(-61.0 80.5 80.5) translate(80.5 18.5) scale(0.8 1.15)"><text x="0" y="0" text-anchor="middle" dominant-baseline="central" font-size="19" font-weight="bold" fill="#f5141c" font-family="Liberation Sans">社</text></g><g transform="rotate(-41.0 80.5 80.5) translate(80.5 18.5) scale(0.8 1.15)"><text x="0" y="0" text-anchor="middle" dominant-baseline="central" font-size="19" font-weight="bold" fill="#f5141c" font-family="Liberation Sans">会</text></g><g transform="rotate(-21.0 80.5 80.5) translate(80.5 18.5) scale(0.8 1.15)"><text x="0" y="0" text-anchor="middle" dominant-baseline="central" font-size="19" font-weight="bold" fill="#f5141c" font-family="Liberation Sans">保</text></g><g transform="rotate(-1.0 80.5 80.5) translate(80.5 18.5) scale(0.8 1.15)"><text x="0" y="0" text-anchor="middle" dominant-baseline="central" font-size="19" font-weight="bold" fill="#f5141c" font-family="Liberation Sans">险</text></g><g transform="rotate(19.0 80.5 80.5) translate(80.5 18.5) scale(0.8 1.15)"><text x="0" y="0" text-anchor="middle" dominant-baseline="central" font-size="19" font-weight="bold" fill="#f5141c" font-family="Liberation Sans">事</text></g><g transform="rotate(39.0 80.5 80.5) translate(80.5 18.5) scale(0.8 1.15)"><text x="0" y="0" text-anchor="middle" dominant-baseline="central" font-size="19" font-weight="bold" fill="#f5141c" font-family="Liberation Sans">业</text></g><g transform="rotate(59.0 80.5 80.5) translate(80.5 18.5) scale(0.8 1.15)"><text x="0" y="0" text-anchor="middle" dominant-baseline="central" font-size="19" font-weight="bold" fill="#f5141c" font-family="Liberation Sans">服</text></g><g transform="rotate(79.0 80.5 80.5) translate(80.5 18.5) scale(0.8 1.15)"><text x="0" y="0" text-anchor="middle" dominant-baseline="central" font-size="19" font-weight="bold" fill="#f5141c" font-family="Liberation Sans">务</text></g><g transform="rotate(99.0 80.5 80.5) translate(80.5 18.5) scale(0.8 1.15)"><text x="0" y="0" text-anchor="middle" dominant-baseline="central" font-size="19" font-weight="bold" fill="#f5141c" font-family="Liberation Sans">中</text></g><g transform="rotate(119.0 80.5 80.5) translate(80.5 18.5) scale(0.8 1.15)"><text x="0" y="0" text-anchor="middle" dominant-baseline="central" font-size="19" font-weight="bold" fill="#f5141c" font-family="Liberation Sans">心</text></g><polygon points="80.5,48.1 88.0,71.2 112.3,71.2 92.6,85.4 100.1,108.5 80.5,94.3 60.9,108.5 68.4,85.4 48.7,71.2 73.0,71.2" fill="#f5141c"/><g transform="translate(80.5 124) scale(0.9 1.05)"><text x="0" y="0" text-anchor="middle" font-size="14" font-weight="bold" fill="#f5141c" font-family="Liberation Sans">网办业务</text></g><g transform="translate(80.5 141) scale(0.9 1.05)"><text x="0" y="0" text-anchor="middle" font-size="14" font-weight="bold" fill="#f5141c" font-family="Liberation Sans">专用章</text></g></svg>
<svg class="a" style="left:1366px;top:398.5px;mix-blend-mode:multiply" width="161" height="161" viewBox="0 0 161 161"><circle cx="80.5" cy="80.5" r="78.4" fill="none" stroke="#f5141c" stroke-width="3.2"/><g transform="rotate(-118.0 80.5 80.5) translate(80.5 19.5) scale(0.78 1.15)"><text x="0" y="0" text-anchor="middle" dominant-baseline="central" font-size="20" font-weight="bold" fill="#f5141c" font-family="Liberation Sans">盘</text></g><g transform="rotate(-96.4 80.5 80.5) translate(80.5 19.5) scale(0.78 1.15)"><text x="0" y="0" text-anchor="middle" dominant-baseline="central" font-size="20" font-weight="bold" fill="#f5141c" font-family="Liberation Sans">锦</text></g><g transform="rotate(-74.7 80.5 80.5) translate(80.5 19.5) scale(0.78 1.15)"><text x="0" y="0" text-anchor="middle" dominant-baseline="central" font-size="20" font-weight="bold" fill="#f5141c" font-family="Liberation Sans">市</text></g><g transform="rotate(-53.1 80.5 80.5) translate(80.5 19.5) scale(0.78 1.15)"><text x="0" y="0" text-anchor="middle" dominant-baseline="central" font-size="20" font-weight="bold" fill="#f5141c" font-family="Liberation Sans">失</text></g><g transform="rotate(-31.5 80.5 80.5) translate(80.5 19.5) scale(0.78 1.15)"><text x="0" y="0" text-anchor="middle" dominant-baseline="central" font-size="20" font-weight="bold" fill="#f5141c" font-family="Liberation Sans">业</text></g><g transform="rotate(-9.8 80.5 80.5) translate(80.5 19.5) scale(0.78 1.15)"><text x="0" y="0" text-anchor="middle" dominant-baseline="central" font-size="20" font-weight="bold" fill="#f5141c" font-family="Liberation Sans">保</text></g><g transform="rotate(11.8 80.5 80.5) translate(80.5 19.5) scale(0.78 1.15)"><text x="0" y="0" text-anchor="middle" dominant-baseline="central" font-size="20" font-weight="bold" fill="#f5141c" font-family="Liberation Sans">险</text></g><g transform="rotate(33.5 80.5 80.5) translate(80.5 19.5) scale(0.78 1.15)"><text x="0" y="0" text-anchor="middle" dominant-baseline="central" font-size="20" font-weight="bold" fill="#f5141c" font-family="Liberation Sans">业</text></g><g transform="rotate(55.1 80.5 80.5) translate(80.5 19.5) scale(0.78 1.15)"><text x="0" y="0" text-anchor="middle" dominant-baseline="central" font-size="20" font-weight="bold" fill="#f5141c" font-family="Liberation Sans">务</text></g><g transform="rotate(76.7 80.5 80.5) translate(80.5 19.5) scale(0.78 1.15)"><text x="0" y="0" text-anchor="middle" dominant-baseline="central" font-size="20" font-weight="bold" fill="#f5141c" font-family="Liberation Sans">专</text></g><g transform="rotate(98.4 80.5 80.5) translate(80.5 19.5) scale(0.78 1.15)"><text x="0" y="0" text-anchor="middle" dominant-baseline="central" font-size="20" font-weight="bold" fill="#f5141c" font-family="Liberation Sans">用</text></g><g transform="rotate(120.0 80.5 80.5) translate(80.5 19.5) scale(0.78 1.15)"><text x="0" y="0" text-anchor="middle" dominant-baseline="central" font-size="20" font-weight="bold" fill="#f5141c" font-family="Liberation Sans">章</text></g><polygon points="80.5,47.2 88.1,70.6 112.6,70.6 92.8,85.0 100.4,108.3 80.5,93.9 60.6,108.3 68.2,85.0 48.4,70.6 72.9,70.6" fill="#f5141c"/></svg>
<!-- status bar -->
<div id="status" class="a" style="left:6px;top:1016px;width:1920px;height:22px;background:#f3f3f3;border-top:1px solid #d4d4d4"></div>
<div class="t" style="left:18px;top:1022px;color:#444;letter-spacing:0.3px">第 87 页，共 443 页</div>
<div class="t" style="left:148px;top:1022px;color:#444;letter-spacing:0.4px">10/42083 个字</div>
<svg class="a" style="left:249px;top:1020px" width="15" height="15" viewBox="0 0 15 15"><path d="M0.5 1.5 H6 Q7.5 1.5 7.5 3 V14 Q7 12.5 5.5 12.5 H0.5 Z M7.5 3 Q7.5 1.5 9 1.5 H9.5" fill="none" stroke="#555"/><path d="M9 4 L13 8 M13 4 L9 8" stroke="#555"/></svg>
<div class="t" style="left:281px;top:1022px;color:#444">简体中文(中国大陆)</div>
<svg class="a" style="left:402px;top:1020px" width="16" height="15" viewBox="0 0 16 15"><path d="M4 3 A6 6 0 1 0 13 6" fill="none" stroke="#555" stroke-width="1.2"/><path d="M6.5 2 L10 2" stroke="#555"/><path d="M8 8 L14 14 M14 8 L8 14" stroke="#444" stroke-width="1.6"/></svg>
<div class="t" style="left:422px;top:1022px;color:#444;font-weight:bold">辅助功能: 调查</div>
<svg class="a" style="left:1633px;top:1020px" width="15" height="14" viewBox="0 0 15 14"><path d="M0.5 1.5 H6 L7.5 3 L9 1.5 H14.5 V12 H9 L7.5 13.5 L6 12 H0.5 Z M7.5 3 V13" fill="none" stroke="#555"/><path d="M2 4.5h4M2 7h4M2 9.5h4M9 4.5h4M9 7h4M9 9.5h4" stroke="#777"/></svg>
<div class="a" style="left:1661px;top:1017px;width:40px;height:21px;background:#c6c6c6"></div>
<svg class="a" style="left:1674px;top:1020px" width="14" height="14" viewBox="0 0 14 14"><rect x="0.5" y="0.5" width="13" height="13" fill="none" stroke="#555"/><path d="M3 3.5h8M3 6h8M3 8.5h8M3 11h8" stroke="#555"/></svg>
<svg class="a" style="left:1713px;top:1019px" width="16" height="16" viewBox="0 0 16 16"><path d="M0.5 0.5 H10 V6 M0.5 0.5 V13.5 H6" fill="none" stroke="#555"/><path d="M2.5 3.5h6M2.5 6h6M2.5 8.5h4" stroke="#777"/><circle cx="11" cy="11" r="4" fill="#fff" stroke="#555"/><path d="M8 10 Q11 12 13 9" stroke="#555" fill="none"/></svg>
<div class="a" style="left:1750px;top:1026px;width:6px;height:1px;background:#444"></div>
<div class="a" style="left:1760px;top:1026px;width:101px;height:1px;background:#555"></div>
<div class="a" style="left:1812px;top:1020px;width:6px;height:13px;background:#444"></div>
<div class="a" style="left:1811px;top:1023px;width:1px;height:7px;background:#444"></div>
<div class="a" style="left:1863px;top:1026px;width:9px;height:1px;background:#444"></div>
<div class="a" style="left:1867px;top:1022px;width:1px;height:9px;background:#444"></div>
<div class="t" style="left:1886px;top:1022px;color:#444">130%</div>
<div class="a" style="left:6px;top:1038px;width:1926px;height:6px;background:#232f38"></div>
<div class="a" style="left:251px;top:1038px;width:97px;height:6px;background:#a8642c"></div>
<div class="a" style="left:299px;top:1038px;width:1px;height:6px;background:#23313b"></div>
<div class="a" style="left:888px;top:1038px;width:48px;height:6px;background:#4a5358"></div>
</body></html>
